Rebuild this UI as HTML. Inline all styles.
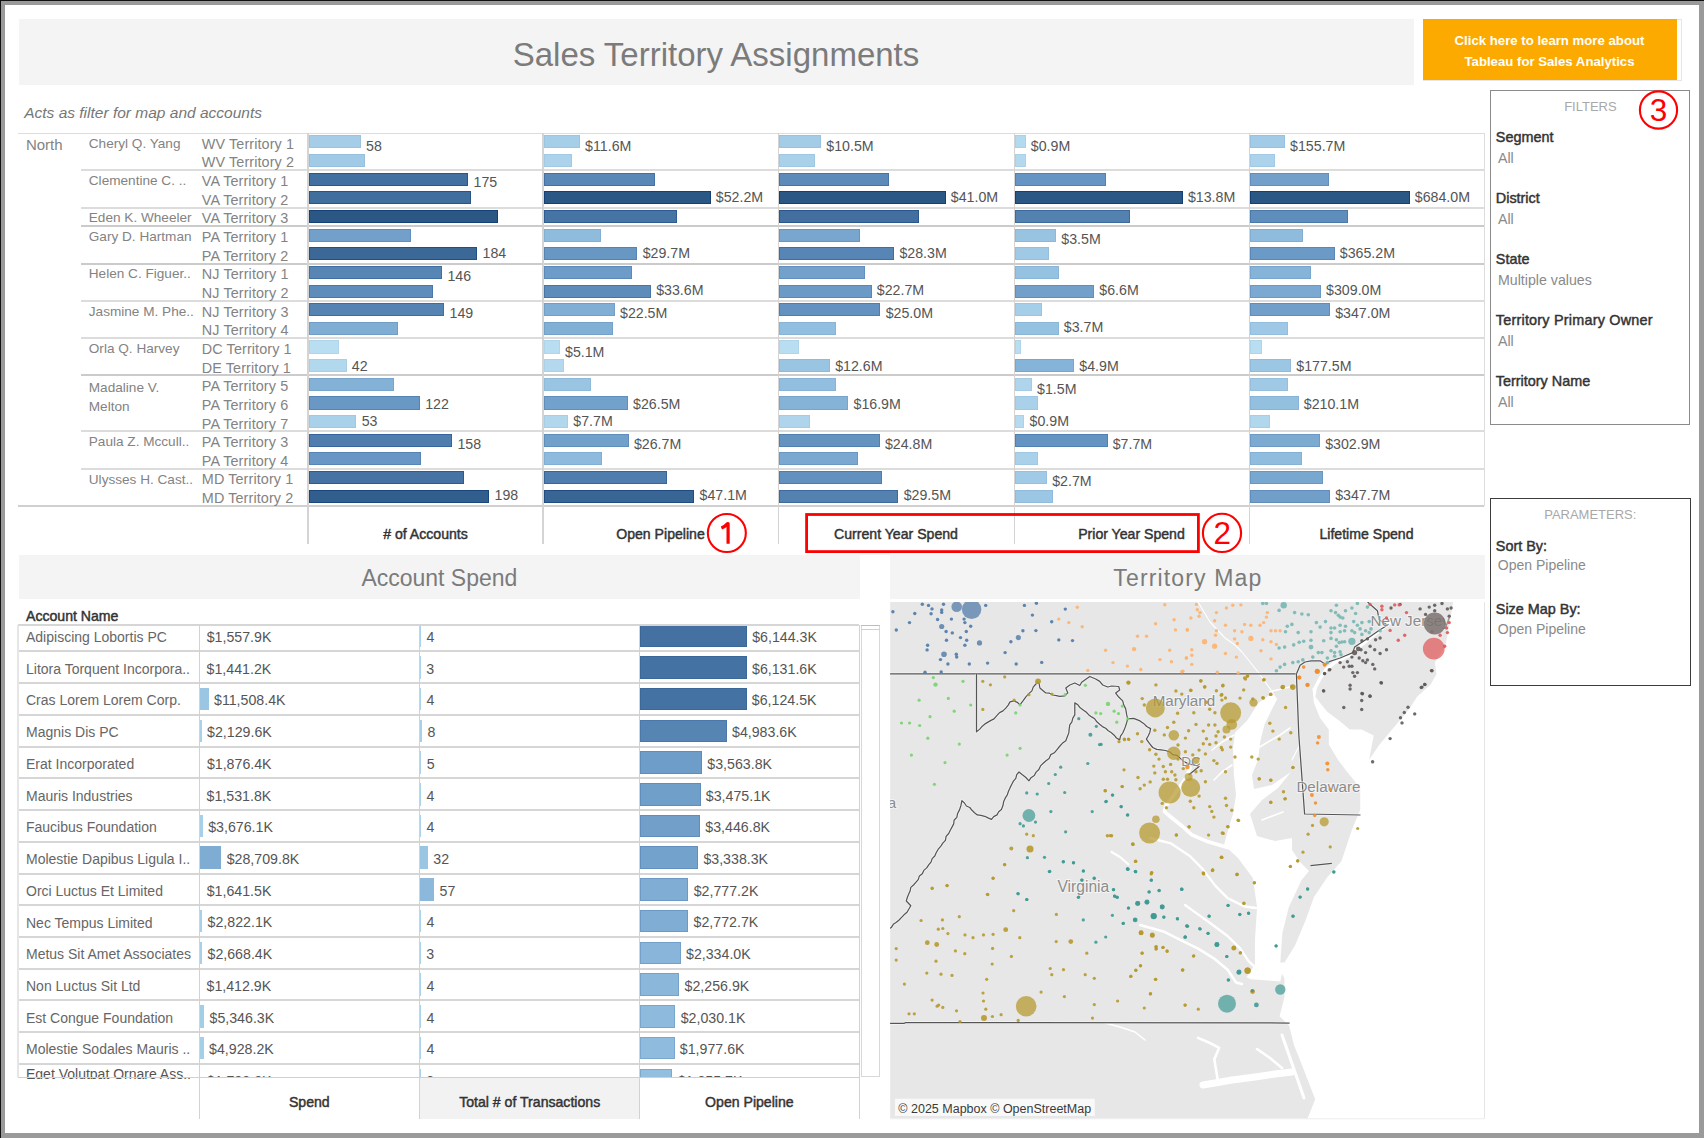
<!DOCTYPE html>
<html><head><meta charset="utf-8"><title>Sales Territory Assignments</title>
<style>
html,body{margin:0;padding:0;}
body{width:1704px;height:1138px;position:relative;overflow:hidden;background:#9a9a9a;font-family:"Liberation Sans", sans-serif;}
.t{position:absolute;white-space:nowrap;}
.r{position:absolute;box-sizing:border-box;}
svg{position:absolute;}
</style></head><body>

<div class="r" style="left:0.0px;top:0.0px;width:1704.0px;height:1.0px;background:#111;"></div>
<div class="r" style="left:0.0px;top:0.0px;width:1.0px;height:1138.0px;background:#111;"></div>
<div class="r" style="left:5.0px;top:5.0px;width:1694.0px;height:1128.0px;background:#ffffff;"></div>
<div class="r" style="left:19.0px;top:18.5px;width:1395.0px;height:66.5px;background:#f4f4f4;"></div>
<div class="t" style="left:416.0px;width:600px;text-align:center;top:38.1px;font-size:33px;line-height:33px;color:#7b7b7b;font-weight:normal;font-style:normal;">Sales Territory Assignments</div>
<div class="r" style="left:1423.0px;top:18.5px;width:259.0px;height:62.0px;background:#ffffff;border:1px solid #e6e6e6;border-left:none;"></div>
<div class="r" style="left:1423.0px;top:18.5px;width:253.5px;height:61.7px;background:#fdaa00;"></div>
<div class="t" style="left:1249.5px;width:600px;text-align:center;top:34.4px;font-size:13.2px;line-height:13.2px;color:#ffffff;font-weight:bold;font-style:normal;">Click here to learn more about</div>
<div class="t" style="left:1249.5px;width:600px;text-align:center;top:54.6px;font-size:13.2px;line-height:13.2px;color:#ffffff;font-weight:bold;font-style:normal;">Tableau for Sales Analytics</div>
<div class="t" style="left:24.2px;top:105.3px;font-size:15.5px;line-height:15.5px;color:#777777;font-weight:normal;font-style:italic;">Acts as filter for map and accounts</div>
<div class="r" style="left:18.0px;top:132.5px;width:1466.2px;height:1.2px;background:#dddddd;"></div>
<div class="r" style="left:81.0px;top:169.0px;width:1403.2px;height:2.0px;background:#dcdcdc;"></div>
<div class="r" style="left:81.0px;top:207.0px;width:1403.2px;height:2.0px;background:#dcdcdc;"></div>
<div class="r" style="left:81.0px;top:225.0px;width:1403.2px;height:2.0px;background:#cbcbcb;"></div>
<div class="r" style="left:81.0px;top:263.0px;width:1403.2px;height:2.0px;background:#cbcbcb;"></div>
<div class="r" style="left:81.0px;top:300.0px;width:1403.2px;height:2.0px;background:#dcdcdc;"></div>
<div class="r" style="left:81.0px;top:337.0px;width:1403.2px;height:2.0px;background:#dcdcdc;"></div>
<div class="r" style="left:81.0px;top:374.0px;width:1403.2px;height:2.0px;background:#cbcbcb;"></div>
<div class="r" style="left:81.0px;top:430.0px;width:1403.2px;height:2.0px;background:#dcdcdc;"></div>
<div class="r" style="left:81.0px;top:468.0px;width:1403.2px;height:2.0px;background:#dcdcdc;"></div>
<div class="r" style="left:18.0px;top:505.4px;width:1466.2px;height:1.4px;background:#d0d0d0;"></div>
<div class="r" style="left:307.4px;top:133.0px;width:1.2px;height:411.0px;background:#d4d4d4;"></div>
<div class="r" style="left:542.4px;top:133.0px;width:1.2px;height:411.0px;background:#d4d4d4;"></div>
<div class="r" style="left:777.7px;top:133.0px;width:1.2px;height:411.0px;background:#d4d4d4;"></div>
<div class="r" style="left:1013.5px;top:133.0px;width:1.2px;height:411.0px;background:#d4d4d4;"></div>
<div class="r" style="left:1248.8px;top:133.0px;width:1.2px;height:411.0px;background:#d4d4d4;"></div>
<div class="r" style="left:1483.6px;top:133.0px;width:1.2px;height:373.0px;background:#dddddd;"></div>
<div class="t" style="left:25.9px;top:136.8px;font-size:15px;line-height:15px;color:#838383;font-weight:normal;font-style:normal;">North</div>
<div class="t" style="left:88.8px;top:136.8px;font-size:13.6px;line-height:13.6px;color:#838383;font-weight:normal;font-style:normal;">Cheryl Q. Yang</div>
<div class="t" style="left:201.8px;top:136.7px;font-size:14.4px;line-height:14.4px;color:#838383;font-weight:normal;font-style:normal;letter-spacing:0.1px;">WV Territory 1</div>
<div class="t" style="left:201.8px;top:155.4px;font-size:14.4px;line-height:14.4px;color:#838383;font-weight:normal;font-style:normal;letter-spacing:0.1px;">WV Territory 2</div>
<div class="t" style="left:88.8px;top:174.1px;font-size:13.6px;line-height:13.6px;color:#838383;font-weight:normal;font-style:normal;">Clementine C. ..</div>
<div class="t" style="left:201.8px;top:174.0px;font-size:14.4px;line-height:14.4px;color:#838383;font-weight:normal;font-style:normal;letter-spacing:0.1px;">VA Territory 1</div>
<div class="t" style="left:201.8px;top:192.7px;font-size:14.4px;line-height:14.4px;color:#838383;font-weight:normal;font-style:normal;letter-spacing:0.1px;">VA Territory 2</div>
<div class="t" style="left:88.8px;top:211.4px;font-size:13.6px;line-height:13.6px;color:#838383;font-weight:normal;font-style:normal;">Eden K. Wheeler</div>
<div class="t" style="left:201.8px;top:211.3px;font-size:14.4px;line-height:14.4px;color:#838383;font-weight:normal;font-style:normal;letter-spacing:0.1px;">VA Territory 3</div>
<div class="t" style="left:88.8px;top:230.1px;font-size:13.6px;line-height:13.6px;color:#838383;font-weight:normal;font-style:normal;">Gary D. Hartman</div>
<div class="t" style="left:201.8px;top:230.0px;font-size:14.4px;line-height:14.4px;color:#838383;font-weight:normal;font-style:normal;letter-spacing:0.1px;">PA Territory 1</div>
<div class="t" style="left:201.8px;top:248.6px;font-size:14.4px;line-height:14.4px;color:#838383;font-weight:normal;font-style:normal;letter-spacing:0.1px;">PA Territory 2</div>
<div class="t" style="left:88.8px;top:267.4px;font-size:13.6px;line-height:13.6px;color:#838383;font-weight:normal;font-style:normal;">Helen C. Figuer..</div>
<div class="t" style="left:201.8px;top:267.3px;font-size:14.4px;line-height:14.4px;color:#838383;font-weight:normal;font-style:normal;letter-spacing:0.1px;">NJ Territory 1</div>
<div class="t" style="left:201.8px;top:285.9px;font-size:14.4px;line-height:14.4px;color:#838383;font-weight:normal;font-style:normal;letter-spacing:0.1px;">NJ Territory 2</div>
<div class="t" style="left:88.8px;top:304.7px;font-size:13.6px;line-height:13.6px;color:#838383;font-weight:normal;font-style:normal;">Jasmine M. Phe..</div>
<div class="t" style="left:201.8px;top:304.6px;font-size:14.4px;line-height:14.4px;color:#838383;font-weight:normal;font-style:normal;letter-spacing:0.1px;">NJ Territory 3</div>
<div class="t" style="left:201.8px;top:323.2px;font-size:14.4px;line-height:14.4px;color:#838383;font-weight:normal;font-style:normal;letter-spacing:0.1px;">NJ Territory 4</div>
<div class="t" style="left:88.8px;top:342.0px;font-size:13.6px;line-height:13.6px;color:#838383;font-weight:normal;font-style:normal;">Orla Q. Harvey</div>
<div class="t" style="left:201.8px;top:341.9px;font-size:14.4px;line-height:14.4px;color:#838383;font-weight:normal;font-style:normal;letter-spacing:0.1px;">DC Territory 1</div>
<div class="t" style="left:201.8px;top:360.5px;font-size:14.4px;line-height:14.4px;color:#838383;font-weight:normal;font-style:normal;letter-spacing:0.1px;">DE Territory 1</div>
<div class="t" style="left:88.8px;top:380.6px;font-size:13.6px;line-height:13.6px;color:#838383;font-weight:normal;font-style:normal;">Madaline V.</div>
<div class="t" style="left:88.8px;top:400.3px;font-size:13.6px;line-height:13.6px;color:#838383;font-weight:normal;font-style:normal;">Melton</div>
<div class="t" style="left:201.8px;top:379.2px;font-size:14.4px;line-height:14.4px;color:#838383;font-weight:normal;font-style:normal;letter-spacing:0.1px;">PA Territory 5</div>
<div class="t" style="left:201.8px;top:397.8px;font-size:14.4px;line-height:14.4px;color:#838383;font-weight:normal;font-style:normal;letter-spacing:0.1px;">PA Territory 6</div>
<div class="t" style="left:201.8px;top:416.5px;font-size:14.4px;line-height:14.4px;color:#838383;font-weight:normal;font-style:normal;letter-spacing:0.1px;">PA Territory 7</div>
<div class="t" style="left:88.8px;top:435.2px;font-size:13.6px;line-height:13.6px;color:#838383;font-weight:normal;font-style:normal;">Paula Z. Mccull..</div>
<div class="t" style="left:201.8px;top:435.1px;font-size:14.4px;line-height:14.4px;color:#838383;font-weight:normal;font-style:normal;letter-spacing:0.1px;">PA Territory 3</div>
<div class="t" style="left:201.8px;top:453.8px;font-size:14.4px;line-height:14.4px;color:#838383;font-weight:normal;font-style:normal;letter-spacing:0.1px;">PA Territory 4</div>
<div class="t" style="left:88.8px;top:472.5px;font-size:13.6px;line-height:13.6px;color:#838383;font-weight:normal;font-style:normal;">Ulysses H. Cast..</div>
<div class="t" style="left:201.8px;top:472.4px;font-size:14.4px;line-height:14.4px;color:#838383;font-weight:normal;font-style:normal;letter-spacing:0.1px;">MD Territory 1</div>
<div class="t" style="left:201.8px;top:491.1px;font-size:14.4px;line-height:14.4px;color:#838383;font-weight:normal;font-style:normal;letter-spacing:0.1px;">MD Territory 2</div>
<div class="r" style="left:308.9px;top:135.3px;width:51.9px;height:13.2px;background:#a5cde8;border:1px solid #9bc4e1;"></div>
<div class="r" style="left:308.9px;top:154.0px;width:56.6px;height:13.2px;background:#a0cae6;border:1px solid #96c0de;"></div>
<div class="r" style="left:308.9px;top:172.6px;width:159.5px;height:13.2px;background:#4270a0;border:1px solid #29578d;"></div>
<div class="r" style="left:308.9px;top:191.2px;width:162.1px;height:13.2px;background:#406e9d;border:1px solid #27548b;"></div>
<div class="r" style="left:308.9px;top:209.9px;width:189.4px;height:13.2px;background:#2a5783;border:1px solid #134077;"></div>
<div class="r" style="left:308.9px;top:228.6px;width:102.5px;height:13.2px;background:#72a0cb;border:1px solid #618ebd;"></div>
<div class="r" style="left:308.9px;top:247.2px;width:168.4px;height:13.2px;background:#3b6897;border:1px solid #224f86;"></div>
<div class="r" style="left:308.9px;top:265.8px;width:133.3px;height:13.2px;background:#5786b5;border:1px solid #406fa3;"></div>
<div class="r" style="left:308.9px;top:284.5px;width:124.4px;height:13.2px;background:#5e8dbb;border:1px solid #4977aa;"></div>
<div class="r" style="left:308.9px;top:303.2px;width:135.4px;height:13.2px;background:#5584b3;border:1px solid #3e6da1;"></div>
<div class="r" style="left:308.9px;top:321.8px;width:89.1px;height:13.2px;background:#80add4;border:1px solid #719ec8;"></div>
<div class="r" style="left:308.9px;top:340.4px;width:30.5px;height:13.2px;background:#b9ddf1;border:1px solid #b0d4ea;"></div>
<div class="r" style="left:308.9px;top:359.1px;width:37.7px;height:13.2px;background:#b2d8ee;border:1px solid #a9cfe7;"></div>
<div class="r" style="left:308.9px;top:377.8px;width:84.7px;height:13.2px;background:#84b2d7;border:1px solid #76a4cc;"></div>
<div class="r" style="left:308.9px;top:396.4px;width:111.1px;height:13.2px;background:#6998c5;border:1px solid #5685b5;"></div>
<div class="r" style="left:308.9px;top:415.1px;width:47.6px;height:13.2px;background:#a9d1ea;border:1px solid #a0c8e3;"></div>
<div class="r" style="left:308.9px;top:433.7px;width:143.3px;height:13.2px;background:#4f7dae;border:1px solid #37659b;"></div>
<div class="r" style="left:308.9px;top:452.3px;width:111.9px;height:13.2px;background:#6897c5;border:1px solid #5584b5;"></div>
<div class="r" style="left:308.9px;top:471.0px;width:155.1px;height:13.2px;background:#4673a4;border:1px solid #2d5a91;"></div>
<div class="r" style="left:308.9px;top:489.6px;width:180.4px;height:13.2px;background:#315e8c;border:1px solid #19467d;"></div>
<div class="t" style="left:366.0px;top:138.9px;font-size:14.2px;line-height:14.2px;color:#555555;font-weight:normal;font-style:normal;">58</div>
<div class="t" style="left:473.6px;top:175.4px;font-size:14.2px;line-height:14.2px;color:#555555;font-weight:normal;font-style:normal;">175</div>
<div class="t" style="left:482.5px;top:245.6px;font-size:14.2px;line-height:14.2px;color:#555555;font-weight:normal;font-style:normal;">184</div>
<div class="t" style="left:447.4px;top:268.7px;font-size:14.2px;line-height:14.2px;color:#555555;font-weight:normal;font-style:normal;">146</div>
<div class="t" style="left:449.5px;top:306.1px;font-size:14.2px;line-height:14.2px;color:#555555;font-weight:normal;font-style:normal;">149</div>
<div class="t" style="left:351.8px;top:358.5px;font-size:14.2px;line-height:14.2px;color:#555555;font-weight:normal;font-style:normal;">42</div>
<div class="t" style="left:425.2px;top:397.1px;font-size:14.2px;line-height:14.2px;color:#555555;font-weight:normal;font-style:normal;">122</div>
<div class="t" style="left:361.7px;top:413.9px;font-size:14.2px;line-height:14.2px;color:#555555;font-weight:normal;font-style:normal;">53</div>
<div class="t" style="left:457.4px;top:436.8px;font-size:14.2px;line-height:14.2px;color:#555555;font-weight:normal;font-style:normal;">158</div>
<div class="t" style="left:494.5px;top:487.5px;font-size:14.2px;line-height:14.2px;color:#555555;font-weight:normal;font-style:normal;">198</div>
<div class="r" style="left:543.9px;top:135.3px;width:36.0px;height:13.2px;background:#a5cee8;border:1px solid #9bc5e1;"></div>
<div class="r" style="left:543.9px;top:154.0px;width:28.5px;height:13.2px;background:#acd3eb;border:1px solid #a3cae4;"></div>
<div class="r" style="left:543.9px;top:172.6px;width:111.1px;height:13.2px;background:#5988b7;border:1px solid #4371a5;"></div>
<div class="r" style="left:543.9px;top:191.2px;width:166.7px;height:13.2px;background:#2a5783;border:1px solid #134077;"></div>
<div class="r" style="left:543.9px;top:209.9px;width:133.3px;height:13.2px;background:#4674a5;border:1px solid #2d5b92;"></div>
<div class="r" style="left:543.9px;top:228.6px;width:57.6px;height:13.2px;background:#8fbcdd;border:1px solid #82afd3;"></div>
<div class="r" style="left:543.9px;top:247.2px;width:93.6px;height:13.2px;background:#6897c4;border:1px solid #5584b4;"></div>
<div class="r" style="left:543.9px;top:265.8px;width:88.3px;height:13.2px;background:#6d9cc8;border:1px solid #5b8ab9;"></div>
<div class="r" style="left:543.9px;top:284.5px;width:107.1px;height:13.2px;background:#5d8bba;border:1px solid #4775a8;"></div>
<div class="r" style="left:543.9px;top:303.2px;width:70.9px;height:13.2px;background:#80aed4;border:1px solid #719fc8;"></div>
<div class="r" style="left:543.9px;top:321.8px;width:69.4px;height:13.2px;background:#82b0d5;border:1px solid #73a1c9;"></div>
<div class="r" style="left:543.9px;top:340.4px;width:15.9px;height:13.2px;background:#b9ddf1;border:1px solid #b0d4ea;"></div>
<div class="r" style="left:543.9px;top:359.1px;width:20.6px;height:13.2px;background:#b4d9ef;border:1px solid #abd0e8;"></div>
<div class="r" style="left:543.9px;top:377.8px;width:47.6px;height:13.2px;background:#99c5e3;border:1px solid #8ebadb;"></div>
<div class="r" style="left:543.9px;top:396.4px;width:84.0px;height:13.2px;background:#72a1cb;border:1px solid #618fbd;"></div>
<div class="r" style="left:543.9px;top:415.1px;width:24.2px;height:13.2px;background:#b1d7ed;border:1px solid #a8cee6;"></div>
<div class="r" style="left:543.9px;top:433.7px;width:84.8px;height:13.2px;background:#71a0ca;border:1px solid #608ebc;"></div>
<div class="r" style="left:543.9px;top:452.3px;width:58.4px;height:13.2px;background:#8ebbdd;border:1px solid #81aed3;"></div>
<div class="r" style="left:543.9px;top:471.0px;width:123.6px;height:13.2px;background:#4f7dad;border:1px solid #37659a;"></div>
<div class="r" style="left:543.9px;top:489.6px;width:150.5px;height:13.2px;background:#386593;border:1px solid #1f4c82;"></div>
<div class="t" style="left:585.1px;top:138.9px;font-size:14.2px;line-height:14.2px;color:#555555;font-weight:normal;font-style:normal;">$11.6M</div>
<div class="t" style="left:715.8px;top:189.9px;font-size:14.2px;line-height:14.2px;color:#555555;font-weight:normal;font-style:normal;">$52.2M</div>
<div class="t" style="left:642.7px;top:245.6px;font-size:14.2px;line-height:14.2px;color:#555555;font-weight:normal;font-style:normal;">$29.7M</div>
<div class="t" style="left:656.2px;top:282.5px;font-size:14.2px;line-height:14.2px;color:#555555;font-weight:normal;font-style:normal;">$33.6M</div>
<div class="t" style="left:620.0px;top:306.1px;font-size:14.2px;line-height:14.2px;color:#555555;font-weight:normal;font-style:normal;">$22.5M</div>
<div class="t" style="left:565.0px;top:344.8px;font-size:14.2px;line-height:14.2px;color:#555555;font-weight:normal;font-style:normal;">$5.1M</div>
<div class="t" style="left:633.1px;top:397.1px;font-size:14.2px;line-height:14.2px;color:#555555;font-weight:normal;font-style:normal;">$26.5M</div>
<div class="t" style="left:573.3px;top:413.9px;font-size:14.2px;line-height:14.2px;color:#555555;font-weight:normal;font-style:normal;">$7.7M</div>
<div class="t" style="left:633.9px;top:436.8px;font-size:14.2px;line-height:14.2px;color:#555555;font-weight:normal;font-style:normal;">$26.7M</div>
<div class="t" style="left:699.6px;top:487.5px;font-size:14.2px;line-height:14.2px;color:#555555;font-weight:normal;font-style:normal;">$47.1M</div>
<div class="r" style="left:779.2px;top:135.3px;width:41.9px;height:13.2px;background:#a3cce7;border:1px solid #99c2e0;"></div>
<div class="r" style="left:779.2px;top:154.0px;width:35.7px;height:13.2px;background:#a9d1ea;border:1px solid #a0c8e3;"></div>
<div class="r" style="left:779.2px;top:172.6px;width:109.9px;height:13.2px;background:#5c8ab9;border:1px solid #4674a7;"></div>
<div class="r" style="left:779.2px;top:191.2px;width:166.4px;height:13.2px;background:#2a5783;border:1px solid #134077;"></div>
<div class="r" style="left:779.2px;top:209.9px;width:139.5px;height:13.2px;background:#426f9f;border:1px solid #29568c;"></div>
<div class="r" style="left:779.2px;top:228.6px;width:80.8px;height:13.2px;background:#78a6cf;border:1px solid #6896c2;"></div>
<div class="r" style="left:779.2px;top:247.2px;width:115.0px;height:13.2px;background:#5785b5;border:1px solid #406ea3;"></div>
<div class="r" style="left:779.2px;top:265.8px;width:85.4px;height:13.2px;background:#73a1cc;border:1px solid #6290be;"></div>
<div class="r" style="left:779.2px;top:284.5px;width:92.4px;height:13.2px;background:#6b9ac7;border:1px solid #5987b8;"></div>
<div class="r" style="left:779.2px;top:303.2px;width:101.3px;height:13.2px;background:#6392c0;border:1px solid #4f7daf;"></div>
<div class="r" style="left:779.2px;top:321.8px;width:57.3px;height:13.2px;background:#92bfe0;border:1px solid #86b3d7;"></div>
<div class="r" style="left:779.2px;top:340.4px;width:20.3px;height:13.2px;background:#b9ddf1;border:1px solid #b0d4ea;"></div>
<div class="r" style="left:779.2px;top:359.1px;width:50.8px;height:13.2px;background:#99c5e3;border:1px solid #8ebadb;"></div>
<div class="r" style="left:779.2px;top:377.8px;width:57.3px;height:13.2px;background:#92bfe0;border:1px solid #86b3d7;"></div>
<div class="r" style="left:779.2px;top:396.4px;width:69.1px;height:13.2px;background:#85b3d7;border:1px solid #77a5cc;"></div>
<div class="r" style="left:779.2px;top:415.1px;width:30.6px;height:13.2px;background:#aed5ec;border:1px solid #a5cce5;"></div>
<div class="r" style="left:779.2px;top:433.7px;width:100.5px;height:13.2px;background:#6493c0;border:1px solid #507fb0;"></div>
<div class="r" style="left:779.2px;top:452.3px;width:79.0px;height:13.2px;background:#7aa8d0;border:1px solid #6a98c3;"></div>
<div class="r" style="left:779.2px;top:471.0px;width:102.5px;height:13.2px;background:#6291bf;border:1px solid #4e7cae;"></div>
<div class="r" style="left:779.2px;top:489.6px;width:119.3px;height:13.2px;background:#5382b1;border:1px solid #3c6a9e;"></div>
<div class="t" style="left:826.3px;top:138.9px;font-size:14.2px;line-height:14.2px;color:#555555;font-weight:normal;font-style:normal;">$10.5M</div>
<div class="t" style="left:950.8px;top:189.9px;font-size:14.2px;line-height:14.2px;color:#555555;font-weight:normal;font-style:normal;">$41.0M</div>
<div class="t" style="left:899.4px;top:245.6px;font-size:14.2px;line-height:14.2px;color:#555555;font-weight:normal;font-style:normal;">$28.3M</div>
<div class="t" style="left:876.8px;top:282.5px;font-size:14.2px;line-height:14.2px;color:#555555;font-weight:normal;font-style:normal;">$22.7M</div>
<div class="t" style="left:885.7px;top:306.1px;font-size:14.2px;line-height:14.2px;color:#555555;font-weight:normal;font-style:normal;">$25.0M</div>
<div class="t" style="left:835.2px;top:358.5px;font-size:14.2px;line-height:14.2px;color:#555555;font-weight:normal;font-style:normal;">$12.6M</div>
<div class="t" style="left:853.5px;top:397.1px;font-size:14.2px;line-height:14.2px;color:#555555;font-weight:normal;font-style:normal;">$16.9M</div>
<div class="t" style="left:884.9px;top:436.8px;font-size:14.2px;line-height:14.2px;color:#555555;font-weight:normal;font-style:normal;">$24.8M</div>
<div class="t" style="left:903.7px;top:487.5px;font-size:14.2px;line-height:14.2px;color:#555555;font-weight:normal;font-style:normal;">$29.5M</div>
<div class="r" style="left:1015.0px;top:135.3px;width:10.6px;height:13.2px;background:#b4daef;border:1px solid #abd1e8;"></div>
<div class="r" style="left:1015.0px;top:154.0px;width:11.4px;height:13.2px;background:#b4d9ef;border:1px solid #abd0e8;"></div>
<div class="r" style="left:1015.0px;top:172.6px;width:91.1px;height:13.2px;background:#6795c3;border:1px solid #5481b3;"></div>
<div class="r" style="left:1015.0px;top:191.2px;width:167.7px;height:13.2px;background:#2a5783;border:1px solid #134077;"></div>
<div class="r" style="left:1015.0px;top:209.9px;width:115.4px;height:13.2px;background:#5382b1;border:1px solid #3c6a9e;"></div>
<div class="r" style="left:1015.0px;top:228.6px;width:41.1px;height:13.2px;background:#98c4e2;border:1px solid #8db9d9;"></div>
<div class="r" style="left:1015.0px;top:247.2px;width:33.9px;height:13.2px;background:#9fc9e5;border:1px solid #95bfdd;"></div>
<div class="r" style="left:1015.0px;top:265.8px;width:44.0px;height:13.2px;background:#95c2e1;border:1px solid #89b6d8;"></div>
<div class="r" style="left:1015.0px;top:284.5px;width:79.1px;height:13.2px;background:#72a0cb;border:1px solid #618ebd;"></div>
<div class="r" style="left:1015.0px;top:303.2px;width:27.4px;height:13.2px;background:#a5cee8;border:1px solid #9bc5e1;"></div>
<div class="r" style="left:1015.0px;top:321.8px;width:43.6px;height:13.2px;background:#96c2e1;border:1px solid #8ab6d8;"></div>
<div class="r" style="left:1015.0px;top:340.4px;width:5.8px;height:13.2px;background:#b9ddf1;border:1px solid #b0d4ea;"></div>
<div class="r" style="left:1015.0px;top:359.1px;width:59.1px;height:13.2px;background:#86b4d8;border:1px solid #78a6cd;"></div>
<div class="r" style="left:1015.0px;top:377.8px;width:16.9px;height:13.2px;background:#afd5ec;border:1px solid #a6cce5;"></div>
<div class="r" style="left:1015.0px;top:396.4px;width:23.1px;height:13.2px;background:#a9d1ea;border:1px solid #a0c8e3;"></div>
<div class="r" style="left:1015.0px;top:415.1px;width:9.4px;height:13.2px;background:#b6daef;border:1px solid #add1e9;"></div>
<div class="r" style="left:1015.0px;top:433.7px;width:92.5px;height:13.2px;background:#6594c2;border:1px solid #5180b2;"></div>
<div class="r" style="left:1015.0px;top:452.3px;width:23.1px;height:13.2px;background:#a9d1ea;border:1px solid #a0c8e3;"></div>
<div class="r" style="left:1015.0px;top:471.0px;width:32.0px;height:13.2px;background:#a0cae6;border:1px solid #96c0de;"></div>
<div class="r" style="left:1015.0px;top:489.6px;width:37.5px;height:13.2px;background:#9bc6e4;border:1px solid #90bbdc;"></div>
<div class="t" style="left:1030.8px;top:138.9px;font-size:14.2px;line-height:14.2px;color:#555555;font-weight:normal;font-style:normal;">$0.9M</div>
<div class="t" style="left:1187.9px;top:189.9px;font-size:14.2px;line-height:14.2px;color:#555555;font-weight:normal;font-style:normal;">$13.8M</div>
<div class="t" style="left:1061.3px;top:231.9px;font-size:14.2px;line-height:14.2px;color:#555555;font-weight:normal;font-style:normal;">$3.5M</div>
<div class="t" style="left:1099.3px;top:282.5px;font-size:14.2px;line-height:14.2px;color:#555555;font-weight:normal;font-style:normal;">$6.6M</div>
<div class="t" style="left:1063.8px;top:320.0px;font-size:14.2px;line-height:14.2px;color:#555555;font-weight:normal;font-style:normal;">$3.7M</div>
<div class="t" style="left:1079.3px;top:358.5px;font-size:14.2px;line-height:14.2px;color:#555555;font-weight:normal;font-style:normal;">$4.9M</div>
<div class="t" style="left:1037.1px;top:381.6px;font-size:14.2px;line-height:14.2px;color:#555555;font-weight:normal;font-style:normal;">$1.5M</div>
<div class="t" style="left:1029.6px;top:413.9px;font-size:14.2px;line-height:14.2px;color:#555555;font-weight:normal;font-style:normal;">$0.9M</div>
<div class="t" style="left:1112.7px;top:436.8px;font-size:14.2px;line-height:14.2px;color:#555555;font-weight:normal;font-style:normal;">$7.7M</div>
<div class="t" style="left:1052.2px;top:474.2px;font-size:14.2px;line-height:14.2px;color:#555555;font-weight:normal;font-style:normal;">$2.7M</div>
<div class="r" style="left:1250.3px;top:135.3px;width:34.6px;height:13.2px;background:#a2cbe7;border:1px solid #98c1e0;"></div>
<div class="r" style="left:1250.3px;top:154.0px;width:24.5px;height:13.2px;background:#acd3eb;border:1px solid #a3cae4;"></div>
<div class="r" style="left:1250.3px;top:172.6px;width:78.8px;height:13.2px;background:#72a0cb;border:1px solid #618ebd;"></div>
<div class="r" style="left:1250.3px;top:191.2px;width:159.3px;height:13.2px;background:#2a5783;border:1px solid #134077;"></div>
<div class="r" style="left:1250.3px;top:209.9px;width:98.0px;height:13.2px;background:#5f8ebc;border:1px solid #4a79ab;"></div>
<div class="r" style="left:1250.3px;top:228.6px;width:52.6px;height:13.2px;background:#8fbcdd;border:1px solid #82afd3;"></div>
<div class="r" style="left:1250.3px;top:247.2px;width:84.3px;height:13.2px;background:#6c9ac7;border:1px solid #5a87b8;"></div>
<div class="r" style="left:1250.3px;top:265.8px;width:60.8px;height:13.2px;background:#86b3d8;border:1px solid #78a5cd;"></div>
<div class="r" style="left:1250.3px;top:284.5px;width:70.6px;height:13.2px;background:#7ba9d1;border:1px solid #6b99c4;"></div>
<div class="r" style="left:1250.3px;top:303.2px;width:79.7px;height:13.2px;background:#719fca;border:1px solid #5f8dbc;"></div>
<div class="r" style="left:1250.3px;top:321.8px;width:38.2px;height:13.2px;background:#9ec8e5;border:1px solid #94bedd;"></div>
<div class="r" style="left:1250.3px;top:340.4px;width:12.0px;height:13.2px;background:#b9ddf1;border:1px solid #b0d4ea;"></div>
<div class="r" style="left:1250.3px;top:359.1px;width:40.8px;height:13.2px;background:#9bc6e4;border:1px solid #90bbdc;"></div>
<div class="r" style="left:1250.3px;top:377.8px;width:37.3px;height:13.2px;background:#9fc9e5;border:1px solid #95bfdd;"></div>
<div class="r" style="left:1250.3px;top:396.4px;width:48.3px;height:13.2px;background:#94c0e0;border:1px solid #88b4d7;"></div>
<div class="r" style="left:1250.3px;top:415.1px;width:20.0px;height:13.2px;background:#b1d7ed;border:1px solid #a8cee6;"></div>
<div class="r" style="left:1250.3px;top:433.7px;width:69.7px;height:13.2px;background:#7caad1;border:1px solid #6c9ac4;"></div>
<div class="r" style="left:1250.3px;top:452.3px;width:51.7px;height:13.2px;background:#90bdde;border:1px solid #84b1d4;"></div>
<div class="r" style="left:1250.3px;top:471.0px;width:72.8px;height:13.2px;background:#78a7cf;border:1px solid #6897c2;"></div>
<div class="r" style="left:1250.3px;top:489.6px;width:79.7px;height:13.2px;background:#719fca;border:1px solid #5f8dbc;"></div>
<div class="t" style="left:1290.1px;top:138.9px;font-size:14.2px;line-height:14.2px;color:#555555;font-weight:normal;font-style:normal;">$155.7M</div>
<div class="t" style="left:1414.8px;top:189.9px;font-size:14.2px;line-height:14.2px;color:#555555;font-weight:normal;font-style:normal;">$684.0M</div>
<div class="t" style="left:1339.8px;top:245.6px;font-size:14.2px;line-height:14.2px;color:#555555;font-weight:normal;font-style:normal;">$365.2M</div>
<div class="t" style="left:1326.1px;top:282.5px;font-size:14.2px;line-height:14.2px;color:#555555;font-weight:normal;font-style:normal;">$309.0M</div>
<div class="t" style="left:1335.2px;top:306.1px;font-size:14.2px;line-height:14.2px;color:#555555;font-weight:normal;font-style:normal;">$347.0M</div>
<div class="t" style="left:1296.3px;top:358.5px;font-size:14.2px;line-height:14.2px;color:#555555;font-weight:normal;font-style:normal;">$177.5M</div>
<div class="t" style="left:1303.8px;top:397.1px;font-size:14.2px;line-height:14.2px;color:#555555;font-weight:normal;font-style:normal;">$210.1M</div>
<div class="t" style="left:1325.2px;top:436.8px;font-size:14.2px;line-height:14.2px;color:#555555;font-weight:normal;font-style:normal;">$302.9M</div>
<div class="t" style="left:1335.2px;top:487.5px;font-size:14.2px;line-height:14.2px;color:#555555;font-weight:normal;font-style:normal;">$347.7M</div>
<div class="t" style="left:125.5px;width:600px;text-align:center;top:526.5px;font-size:14.1px;line-height:14.1px;color:#333333;font-weight:normal;font-style:normal;-webkit-text-stroke:0.45px #333333;"># of Accounts</div>
<div class="t" style="left:360.5px;width:600px;text-align:center;top:526.5px;font-size:14.1px;line-height:14.1px;color:#333333;font-weight:normal;font-style:normal;-webkit-text-stroke:0.45px #333333;">Open Pipeline</div>
<div class="t" style="left:596.0px;width:600px;text-align:center;top:526.5px;font-size:14.1px;line-height:14.1px;color:#333333;font-weight:normal;font-style:normal;-webkit-text-stroke:0.45px #333333;">Current Year Spend</div>
<div class="t" style="left:831.5px;width:600px;text-align:center;top:526.5px;font-size:14.1px;line-height:14.1px;color:#333333;font-weight:normal;font-style:normal;-webkit-text-stroke:0.45px #333333;">Prior Year Spend</div>
<div class="t" style="left:1066.5px;width:600px;text-align:center;top:526.5px;font-size:14.1px;line-height:14.1px;color:#333333;font-weight:normal;font-style:normal;-webkit-text-stroke:0.45px #333333;">Lifetime Spend</div>
<div class="r" style="left:19.0px;top:555.0px;width:841.0px;height:44.0px;background:#f4f4f4;"></div>
<div class="t" style="left:139.4px;width:600px;text-align:center;top:566.8px;font-size:23px;line-height:23px;color:#7b7b7b;font-weight:normal;font-style:normal;">Account Spend</div>
<div class="r" style="left:890.0px;top:555.0px;width:594.5px;height:44.0px;background:#f4f4f4;"></div>
<div class="t" style="left:887.9px;width:600px;text-align:center;top:566.8px;font-size:23px;line-height:23px;color:#7b7b7b;font-weight:normal;font-style:normal;letter-spacing:1.15px;">Territory Map</div>
<div class="t" style="left:26.0px;top:608.5px;font-size:14.1px;line-height:14.1px;color:#333333;font-weight:normal;font-style:normal;-webkit-text-stroke:0.45px #333333;">Account Name</div>
<div style="position:absolute;left:0;top:625.0px;width:870px;height:452.4px;overflow:hidden;">
<div class="t" style="left:26.0px;top:5.0px;font-size:14px;line-height:14px;color:#666666;font-weight:normal;font-style:normal;">Adipiscing Lobortis PC</div>
<div class="t" style="left:206.7px;top:4.9px;font-size:14.2px;line-height:14.2px;color:#555555;font-weight:normal;font-style:normal;">$1,557.9K</div>
<div class="r" style="left:420.3px;top:-0.6px;width:1.0px;height:22.6px;background:#abd2eb;"></div>
<div class="t" style="left:426.5px;top:4.9px;font-size:14.2px;line-height:14.2px;color:#555555;font-weight:normal;font-style:normal;">4</div>
<div class="r" style="left:640.2px;top:-0.6px;width:106.8px;height:22.6px;background:#4471a1;border:1px solid #3a6799;"></div>
<div class="t" style="left:752.2px;top:4.9px;font-size:14.2px;line-height:14.2px;color:#555555;font-weight:normal;font-style:normal;">$6,144.3K</div>
<div class="t" style="left:26.0px;top:36.7px;font-size:14px;line-height:14px;color:#666666;font-weight:normal;font-style:normal;">Litora Torquent Incorpora..</div>
<div class="t" style="left:206.6px;top:36.7px;font-size:14.2px;line-height:14.2px;color:#555555;font-weight:normal;font-style:normal;">$1,441.2K</div>
<div class="r" style="left:420.3px;top:31.1px;width:0.8px;height:22.6px;background:#abd2eb;"></div>
<div class="t" style="left:426.2px;top:36.7px;font-size:14.2px;line-height:14.2px;color:#555555;font-weight:normal;font-style:normal;">3</div>
<div class="r" style="left:640.2px;top:31.1px;width:106.6px;height:22.6px;background:#4472a2;border:1px solid #3a689a;"></div>
<div class="t" style="left:752.0px;top:36.7px;font-size:14.2px;line-height:14.2px;color:#555555;font-weight:normal;font-style:normal;">$6,131.6K</div>
<div class="t" style="left:26.0px;top:68.4px;font-size:14px;line-height:14px;color:#666666;font-weight:normal;font-style:normal;">Cras Lorem Lorem Corp.</div>
<div class="r" style="left:200.3px;top:62.8px;width:8.5px;height:22.6px;background:#9bc6e3;"></div>
<div class="t" style="left:214.0px;top:68.4px;font-size:14.2px;line-height:14.2px;color:#555555;font-weight:normal;font-style:normal;">$11,508.4K</div>
<div class="r" style="left:420.3px;top:62.8px;width:1.0px;height:22.6px;background:#abd2eb;"></div>
<div class="t" style="left:426.5px;top:68.4px;font-size:14.2px;line-height:14.2px;color:#555555;font-weight:normal;font-style:normal;">4</div>
<div class="r" style="left:640.2px;top:62.8px;width:106.4px;height:22.6px;background:#4472a2;border:1px solid #3a689a;"></div>
<div class="t" style="left:751.8px;top:68.4px;font-size:14.2px;line-height:14.2px;color:#555555;font-weight:normal;font-style:normal;">$6,124.5K</div>
<div class="t" style="left:26.0px;top:100.1px;font-size:14px;line-height:14px;color:#666666;font-weight:normal;font-style:normal;">Magnis Dis PC</div>
<div class="r" style="left:200.3px;top:94.6px;width:1.6px;height:22.6px;background:#a9d1ea;"></div>
<div class="t" style="left:207.1px;top:100.1px;font-size:14.2px;line-height:14.2px;color:#555555;font-weight:normal;font-style:normal;">$2,129.6K</div>
<div class="r" style="left:420.3px;top:94.6px;width:2.0px;height:22.6px;background:#a8d0ea;"></div>
<div class="t" style="left:427.5px;top:100.1px;font-size:14.2px;line-height:14.2px;color:#555555;font-weight:normal;font-style:normal;">8</div>
<div class="r" style="left:640.2px;top:94.6px;width:86.6px;height:22.6px;background:#5685b4;border:1px solid #4978aa;"></div>
<div class="t" style="left:732.0px;top:100.1px;font-size:14.2px;line-height:14.2px;color:#555555;font-weight:normal;font-style:normal;">$4,983.6K</div>
<div class="t" style="left:26.0px;top:131.9px;font-size:14px;line-height:14px;color:#666666;font-weight:normal;font-style:normal;">Erat Incorporated</div>
<div class="t" style="left:206.9px;top:131.8px;font-size:14.2px;line-height:14.2px;color:#555555;font-weight:normal;font-style:normal;">$1,876.4K</div>
<div class="r" style="left:420.3px;top:126.3px;width:1.2px;height:22.6px;background:#aad2ea;"></div>
<div class="t" style="left:426.7px;top:131.8px;font-size:14.2px;line-height:14.2px;color:#555555;font-weight:normal;font-style:normal;">5</div>
<div class="r" style="left:640.2px;top:126.3px;width:61.9px;height:22.6px;background:#6e9dc9;border:1px solid #5e8cbb;"></div>
<div class="t" style="left:707.3px;top:131.8px;font-size:14.2px;line-height:14.2px;color:#555555;font-weight:normal;font-style:normal;">$3,563.8K</div>
<div class="t" style="left:26.0px;top:163.6px;font-size:14px;line-height:14px;color:#666666;font-weight:normal;font-style:normal;">Mauris Industries</div>
<div class="t" style="left:206.6px;top:163.5px;font-size:14.2px;line-height:14.2px;color:#555555;font-weight:normal;font-style:normal;">$1,531.8K</div>
<div class="r" style="left:420.3px;top:158.0px;width:1.0px;height:22.6px;background:#abd2eb;"></div>
<div class="t" style="left:426.5px;top:163.5px;font-size:14.2px;line-height:14.2px;color:#555555;font-weight:normal;font-style:normal;">4</div>
<div class="r" style="left:640.2px;top:158.0px;width:60.4px;height:22.6px;background:#709fca;border:1px solid #5f8ebc;"></div>
<div class="t" style="left:705.8px;top:163.5px;font-size:14.2px;line-height:14.2px;color:#555555;font-weight:normal;font-style:normal;">$3,475.1K</div>
<div class="t" style="left:26.0px;top:195.3px;font-size:14px;line-height:14px;color:#666666;font-weight:normal;font-style:normal;">Faucibus Foundation</div>
<div class="r" style="left:200.3px;top:189.7px;width:2.7px;height:22.6px;background:#a7cfe9;"></div>
<div class="t" style="left:208.2px;top:195.3px;font-size:14.2px;line-height:14.2px;color:#555555;font-weight:normal;font-style:normal;">$3,676.1K</div>
<div class="r" style="left:420.3px;top:189.7px;width:1.0px;height:22.6px;background:#abd2eb;"></div>
<div class="t" style="left:426.5px;top:195.3px;font-size:14.2px;line-height:14.2px;color:#555555;font-weight:normal;font-style:normal;">4</div>
<div class="r" style="left:640.2px;top:189.7px;width:59.9px;height:22.6px;background:#719fca;border:1px solid #608ebc;"></div>
<div class="t" style="left:705.3px;top:195.3px;font-size:14.2px;line-height:14.2px;color:#555555;font-weight:normal;font-style:normal;">$3,446.8K</div>
<div class="t" style="left:26.0px;top:227.0px;font-size:14px;line-height:14px;color:#666666;font-weight:normal;font-style:normal;">Molestie Dapibus Ligula I..</div>
<div class="r" style="left:200.3px;top:221.4px;width:21.2px;height:22.6px;background:#7eacd2;"></div>
<div class="t" style="left:226.7px;top:227.0px;font-size:14.2px;line-height:14.2px;color:#555555;font-weight:normal;font-style:normal;">$28,709.8K</div>
<div class="r" style="left:420.3px;top:221.4px;width:7.8px;height:22.6px;background:#9bc6e3;"></div>
<div class="t" style="left:433.3px;top:227.0px;font-size:14.2px;line-height:14.2px;color:#555555;font-weight:normal;font-style:normal;">32</div>
<div class="r" style="left:640.2px;top:221.4px;width:58.0px;height:22.6px;background:#73a2cc;border:1px solid #6290be;"></div>
<div class="t" style="left:703.4px;top:227.0px;font-size:14.2px;line-height:14.2px;color:#555555;font-weight:normal;font-style:normal;">$3,338.3K</div>
<div class="t" style="left:26.0px;top:258.7px;font-size:14px;line-height:14px;color:#666666;font-weight:normal;font-style:normal;">Orci Luctus Et Limited</div>
<div class="t" style="left:206.7px;top:258.7px;font-size:14.2px;line-height:14.2px;color:#555555;font-weight:normal;font-style:normal;">$1,641.5K</div>
<div class="r" style="left:420.3px;top:253.2px;width:14.0px;height:22.6px;background:#8cb9db;"></div>
<div class="t" style="left:439.5px;top:258.7px;font-size:14.2px;line-height:14.2px;color:#555555;font-weight:normal;font-style:normal;">57</div>
<div class="r" style="left:640.2px;top:253.2px;width:48.3px;height:22.6px;background:#7fadd3;border:1px solid #6c9ac4;"></div>
<div class="t" style="left:693.7px;top:258.7px;font-size:14.2px;line-height:14.2px;color:#555555;font-weight:normal;font-style:normal;">$2,777.2K</div>
<div class="t" style="left:26.0px;top:290.5px;font-size:14px;line-height:14px;color:#666666;font-weight:normal;font-style:normal;">Nec Tempus Limited</div>
<div class="r" style="left:200.3px;top:284.9px;width:2.1px;height:22.6px;background:#a8d0ea;"></div>
<div class="t" style="left:207.6px;top:290.4px;font-size:14.2px;line-height:14.2px;color:#555555;font-weight:normal;font-style:normal;">$2,822.1K</div>
<div class="r" style="left:420.3px;top:284.9px;width:1.0px;height:22.6px;background:#abd2eb;"></div>
<div class="t" style="left:426.5px;top:290.4px;font-size:14.2px;line-height:14.2px;color:#555555;font-weight:normal;font-style:normal;">4</div>
<div class="r" style="left:640.2px;top:284.9px;width:48.2px;height:22.6px;background:#7fadd3;border:1px solid #6c9ac4;"></div>
<div class="t" style="left:693.6px;top:290.4px;font-size:14.2px;line-height:14.2px;color:#555555;font-weight:normal;font-style:normal;">$2,772.7K</div>
<div class="t" style="left:26.0px;top:322.2px;font-size:14px;line-height:14px;color:#666666;font-weight:normal;font-style:normal;">Metus Sit Amet Associates</div>
<div class="r" style="left:200.3px;top:316.6px;width:2.0px;height:22.6px;background:#a9d0ea;"></div>
<div class="t" style="left:207.5px;top:322.1px;font-size:14.2px;line-height:14.2px;color:#555555;font-weight:normal;font-style:normal;">$2,668.4K</div>
<div class="r" style="left:420.3px;top:316.6px;width:0.8px;height:22.6px;background:#abd2eb;"></div>
<div class="t" style="left:426.2px;top:322.1px;font-size:14.2px;line-height:14.2px;color:#555555;font-weight:normal;font-style:normal;">3</div>
<div class="r" style="left:640.2px;top:316.6px;width:40.6px;height:22.6px;background:#88b5d9;border:1px solid #74a1c9;"></div>
<div class="t" style="left:686.0px;top:322.1px;font-size:14.2px;line-height:14.2px;color:#555555;font-weight:normal;font-style:normal;">$2,334.0K</div>
<div class="t" style="left:26.0px;top:353.9px;font-size:14px;line-height:14px;color:#666666;font-weight:normal;font-style:normal;">Non Luctus Sit Ltd</div>
<div class="t" style="left:206.5px;top:353.9px;font-size:14.2px;line-height:14.2px;color:#555555;font-weight:normal;font-style:normal;">$1,412.9K</div>
<div class="r" style="left:420.3px;top:348.3px;width:1.0px;height:22.6px;background:#abd2eb;"></div>
<div class="t" style="left:426.5px;top:353.9px;font-size:14.2px;line-height:14.2px;color:#555555;font-weight:normal;font-style:normal;">4</div>
<div class="r" style="left:640.2px;top:348.3px;width:39.2px;height:22.6px;background:#8ab7da;border:1px solid #75a2ca;"></div>
<div class="t" style="left:684.6px;top:353.9px;font-size:14.2px;line-height:14.2px;color:#555555;font-weight:normal;font-style:normal;">$2,256.9K</div>
<div class="t" style="left:26.0px;top:385.6px;font-size:14px;line-height:14px;color:#666666;font-weight:normal;font-style:normal;">Est Congue Foundation</div>
<div class="r" style="left:200.3px;top:380.0px;width:4.0px;height:22.6px;background:#a4cde8;"></div>
<div class="t" style="left:209.5px;top:385.6px;font-size:14.2px;line-height:14.2px;color:#555555;font-weight:normal;font-style:normal;">$5,346.3K</div>
<div class="r" style="left:420.3px;top:380.0px;width:1.0px;height:22.6px;background:#abd2eb;"></div>
<div class="t" style="left:426.5px;top:385.6px;font-size:14.2px;line-height:14.2px;color:#555555;font-weight:normal;font-style:normal;">4</div>
<div class="r" style="left:640.2px;top:380.0px;width:35.3px;height:22.6px;background:#8ebbdd;border:1px solid #79a6cc;"></div>
<div class="t" style="left:680.7px;top:385.6px;font-size:14.2px;line-height:14.2px;color:#555555;font-weight:normal;font-style:normal;">$2,030.1K</div>
<div class="t" style="left:26.0px;top:417.3px;font-size:14px;line-height:14px;color:#666666;font-weight:normal;font-style:normal;">Molestie Sodales Mauris ..</div>
<div class="r" style="left:200.3px;top:411.8px;width:3.6px;height:22.6px;background:#a5cee8;"></div>
<div class="t" style="left:209.1px;top:417.3px;font-size:14.2px;line-height:14.2px;color:#555555;font-weight:normal;font-style:normal;">$4,928.2K</div>
<div class="r" style="left:420.3px;top:411.8px;width:1.0px;height:22.6px;background:#abd2eb;"></div>
<div class="t" style="left:426.5px;top:417.3px;font-size:14.2px;line-height:14.2px;color:#555555;font-weight:normal;font-style:normal;">4</div>
<div class="r" style="left:640.2px;top:411.8px;width:34.4px;height:22.6px;background:#8fbcde;border:1px solid #7aa7cd;"></div>
<div class="t" style="left:679.8px;top:417.3px;font-size:14.2px;line-height:14.2px;color:#555555;font-weight:normal;font-style:normal;">$1,977.6K</div>
<div class="t" style="left:206.8px;top:449.0px;font-size:14.2px;line-height:14.2px;color:#555555;font-weight:normal;font-style:normal;">$1,793.2K</div>
<div class="r" style="left:420.3px;top:443.5px;width:0.8px;height:22.6px;background:#abd2eb;"></div>
<div class="t" style="left:426.2px;top:449.0px;font-size:14.2px;line-height:14.2px;color:#555555;font-weight:normal;font-style:normal;">3</div>
<div class="r" style="left:640.2px;top:443.5px;width:32.3px;height:22.6px;background:#92bfdf;border:1px solid #7ca9ce;"></div>
<div class="t" style="left:677.7px;top:449.0px;font-size:14.2px;line-height:14.2px;color:#555555;font-weight:normal;font-style:normal;">$1,855.7K</div>
<div class="r" style="left:18.0px;top:25.0px;width:841.0px;height:2.0px;background:#d6d6d6;"></div>
<div class="r" style="left:18.0px;top:57.0px;width:841.0px;height:2.0px;background:#d6d6d6;"></div>
<div class="r" style="left:18.0px;top:89.0px;width:841.0px;height:2.0px;background:#d6d6d6;"></div>
<div class="r" style="left:18.0px;top:121.0px;width:841.0px;height:2.0px;background:#d6d6d6;"></div>
<div class="r" style="left:18.0px;top:152.0px;width:841.0px;height:2.0px;background:#d6d6d6;"></div>
<div class="r" style="left:18.0px;top:184.0px;width:841.0px;height:2.0px;background:#d6d6d6;"></div>
<div class="r" style="left:18.0px;top:216.0px;width:841.0px;height:2.0px;background:#d6d6d6;"></div>
<div class="r" style="left:18.0px;top:248.0px;width:841.0px;height:2.0px;background:#d6d6d6;"></div>
<div class="r" style="left:18.0px;top:279.0px;width:841.0px;height:2.0px;background:#d6d6d6;"></div>
<div class="r" style="left:18.0px;top:311.0px;width:841.0px;height:2.0px;background:#d6d6d6;"></div>
<div class="r" style="left:18.0px;top:343.0px;width:841.0px;height:2.0px;background:#d6d6d6;"></div>
<div class="r" style="left:18.0px;top:374.0px;width:841.0px;height:2.0px;background:#d6d6d6;"></div>
<div class="r" style="left:18.0px;top:406.0px;width:841.0px;height:2.0px;background:#d6d6d6;"></div>
<div class="r" style="left:18.0px;top:438.0px;width:841.0px;height:2.0px;background:#d6d6d6;"></div>
</div>
<div style="position:absolute;left:0;top:1063px;width:199px;height:16.2px;overflow:hidden;"><div class="t" style="left:26.0px;top:4.0px;font-size:14px;line-height:14px;color:#555555;font-weight:normal;font-style:normal;">Eget Volutpat Ornare Ass..</div></div>
<div class="r" style="left:18.0px;top:624.4px;width:841.0px;height:1.2px;background:#d6d6d6;"></div>
<div class="r" style="left:18.0px;top:1076.8px;width:841.0px;height:1.2px;background:#d0d0d0;"></div>
<div class="r" style="left:199.2px;top:625.0px;width:1.2px;height:493.8px;background:#d2d2d2;"></div>
<div class="r" style="left:419.2px;top:625.0px;width:1.2px;height:493.8px;background:#d2d2d2;"></div>
<div class="r" style="left:639.0px;top:625.0px;width:1.2px;height:493.8px;background:#d2d2d2;"></div>
<div class="r" style="left:858.5px;top:625.0px;width:1.2px;height:493.8px;background:#d2d2d2;"></div>
<div class="r" style="left:17.4px;top:625.0px;width:1.2px;height:452.4px;background:#e6e6e6;"></div>
<div class="r" style="left:420.4px;top:1078.0px;width:218.6px;height:40.8px;background:#f2f2f2;"></div>
<div class="t" style="left:9.3px;width:600px;text-align:center;top:1095.0px;font-size:14.1px;line-height:14.1px;color:#333333;font-weight:normal;font-style:normal;-webkit-text-stroke:0.45px #333333;">Spend</div>
<div class="t" style="left:229.7px;width:600px;text-align:center;top:1095.0px;font-size:14.1px;line-height:14.1px;color:#333333;font-weight:normal;font-style:normal;-webkit-text-stroke:0.45px #333333;">Total # of Transactions</div>
<div class="t" style="left:449.4px;width:600px;text-align:center;top:1095.0px;font-size:14.1px;line-height:14.1px;color:#333333;font-weight:normal;font-style:normal;-webkit-text-stroke:0.45px #333333;">Open Pipeline</div>
<div class="r" style="left:861.3px;top:624.7px;width:18.3px;height:452.7px;background:#ffffff;border:1px solid #d8d8d8;"></div>
<div class="r" style="left:861.3px;top:624.7px;width:18.3px;height:5.5px;background:transparent;border-top:1.5px solid #bdbdbd;border-bottom:1px solid #d0d0d0;"></div>
<div class="r" style="left:1490.4px;top:89.5px;width:200.0px;height:335.3px;background:#ffffff;border:1.3px solid #8a8a8a;"></div>
<div class="t" style="left:1290.4px;width:600px;text-align:center;top:99.8px;font-size:13px;line-height:13px;color:#a8a8a8;font-weight:normal;font-style:normal;">FILTERS</div>
<div class="t" style="left:1495.8px;top:129.7px;font-size:14.4px;line-height:14.4px;color:#333333;font-weight:normal;font-style:normal;-webkit-text-stroke:0.45px #333333;">Segment</div>
<div class="t" style="left:1498.0px;top:150.9px;font-size:14.2px;line-height:14.2px;color:#8a8a8a;font-weight:normal;font-style:normal;">All</div>
<div class="t" style="left:1495.8px;top:191.1px;font-size:14.4px;line-height:14.4px;color:#333333;font-weight:normal;font-style:normal;-webkit-text-stroke:0.45px #333333;">District</div>
<div class="t" style="left:1498.0px;top:212.3px;font-size:14.2px;line-height:14.2px;color:#8a8a8a;font-weight:normal;font-style:normal;">All</div>
<div class="t" style="left:1495.8px;top:252.1px;font-size:14.4px;line-height:14.4px;color:#333333;font-weight:normal;font-style:normal;-webkit-text-stroke:0.45px #333333;">State</div>
<div class="t" style="left:1498.0px;top:273.3px;font-size:14.2px;line-height:14.2px;color:#8a8a8a;font-weight:normal;font-style:normal;">Multiple values</div>
<div class="t" style="left:1495.8px;top:313.1px;font-size:14.4px;line-height:14.4px;color:#333333;font-weight:normal;font-style:normal;-webkit-text-stroke:0.45px #333333;letter-spacing:0.22px;">Territory Primary Owner</div>
<div class="t" style="left:1498.0px;top:334.3px;font-size:14.2px;line-height:14.2px;color:#8a8a8a;font-weight:normal;font-style:normal;">All</div>
<div class="t" style="left:1495.8px;top:373.9px;font-size:14.4px;line-height:14.4px;color:#333333;font-weight:normal;font-style:normal;-webkit-text-stroke:0.45px #333333;">Territory Name</div>
<div class="t" style="left:1498.0px;top:395.1px;font-size:14.2px;line-height:14.2px;color:#8a8a8a;font-weight:normal;font-style:normal;">All</div>
<div class="r" style="left:1490.0px;top:498.4px;width:200.7px;height:187.8px;background:#ffffff;border:1.5px solid #3c3c3c;"></div>
<div class="t" style="left:1290.3px;width:600px;text-align:center;top:508.3px;font-size:13px;line-height:13px;color:#a8a8a8;font-weight:normal;font-style:normal;">PARAMETERS:</div>
<div class="t" style="left:1495.8px;top:539.0px;font-size:14.4px;line-height:14.4px;color:#333333;font-weight:normal;font-style:normal;-webkit-text-stroke:0.45px #333333;">Sort By:</div>
<div class="t" style="left:1497.8px;top:558.4px;font-size:14.0px;line-height:14.0px;color:#8a8a8a;font-weight:normal;font-style:normal;">Open Pipeline</div>
<div class="t" style="left:1495.8px;top:601.8px;font-size:14.4px;line-height:14.4px;color:#333333;font-weight:normal;font-style:normal;-webkit-text-stroke:0.45px #333333;">Size Map By:</div>
<div class="t" style="left:1497.8px;top:621.8px;font-size:14.0px;line-height:14.0px;color:#8a8a8a;font-weight:normal;font-style:normal;">Open Pipeline</div>
<svg style="left:0;top:0" width="1704" height="1138" viewBox="0 0 1704 1138">
<defs><clipPath id="mc"><rect x="890.1" y="602.0" width="594.4" height="516.8"/></clipPath></defs>
<g clip-path="url(#mc)">
<rect x="890.1" y="602.0" width="594.4" height="516.8" fill="#e7e7e7"/>
<polygon points="1490.0,598.0 1452.9,598.0 1452.9,603.5 1449.2,625.3 1445.4,646.0 1434.9,662.4 1436.4,674.4 1430.4,684.8 1417.0,696.8 1409.5,708.7 1394.6,726.6 1379.6,744.6 1369.2,759.5 1373.7,735.6 1361.7,729.6 1349.8,729.6 1339.3,720.7 1327.3,711.7 1319.9,702.7 1315.4,696.8 1316.9,687.8 1312.4,687.8 1313.9,702.7 1319.9,717.7 1328.8,729.6 1328.8,744.6 1337.8,759.5 1346.8,771.5 1354.2,780.4 1360.2,789.4 1360.2,810.0 1352.0,829.6 1341.4,861.2 1326.7,878.1 1314.0,897.0 1305.6,920.3 1295.0,945.6 1284.5,962.4 1280.0,970.0 1284.4,978.3 1284.4,997.3 1279.6,1016.3 1289.1,1025.8 1293.9,1044.8 1303.3,1068.5 1315.2,1099.3 1305.0,1125.0 1490.0,1125.0" fill="#ffffff"/>
<polygon points="1272.9,692.7 1258.2,703.3 1247.6,720.1 1235.0,732.8 1232.9,749.7 1233.9,774.8 1236.0,795.0 1233.0,814.0 1228.0,830.0 1224.0,845.0 1238.0,858.0 1252.9,878.1 1257.1,907.6 1255.0,939.2 1255.0,964.6 1246.5,977.2 1250.7,979.3 1280.3,981.4 1284.5,962.4 1280.3,962.4 1282.4,932.9 1288.7,907.6 1301.4,880.2 1309.0,871.0 1300.0,862.0 1292.0,850.0 1292.0,838.0 1275.0,841.0 1257.0,836.0 1250.0,814.0 1262.0,800.0 1278.0,788.0 1291.0,772.0 1272.0,785.0 1254.0,789.0 1252.0,775.0 1258.0,760.0 1260.3,741.2 1264.5,724.4 1277.1,699.0" fill="#ffffff"/>
<polyline points="1389.6,623.0 1380.3,630.0 1360.2,646.0 1352.7,653.4 1334.8,662.4 1325.9,669.9 1319.9,678.8 1314.6,689.0" fill="none" stroke="#ffffff" stroke-width="3.4" stroke-linejoin="round" stroke-linecap="round"/>
<polyline points="1190.0,768.0 1186.0,778.0 1176.0,792.0 1166.0,806.0 1164.4,811.6 1172.0,818.0 1182.0,826.0 1191.8,834.8 1206.5,841.2 1227.6,847.5 1248.7,849.6" fill="none" stroke="#ffffff" stroke-width="3.6" stroke-linejoin="round" stroke-linecap="round"/>
<polyline points="1150.0,838.0 1170.7,843.3 1189.7,855.9 1202.3,868.6 1215.0,885.4 1227.6,898.1 1244.5,906.5 1256.0,908.0" fill="none" stroke="#ffffff" stroke-width="2.4" stroke-linejoin="round" stroke-linecap="round"/>
<polyline points="1185.0,905.0 1196.0,912.9 1210.7,923.4 1227.6,936.0 1240.3,948.7 1248.7,961.4 1254.0,966.0" fill="none" stroke="#ffffff" stroke-width="2.4" stroke-linejoin="round" stroke-linecap="round"/>
<polyline points="1140.0,925.0 1164.4,931.8 1181.2,940.3 1198.1,948.7 1215.0,959.2 1227.6,969.8 1236.0,982.4 1242.0,984.0" fill="none" stroke="#ffffff" stroke-width="2.6" stroke-linejoin="round" stroke-linecap="round"/>
<polyline points="1198.0,602.0 1204.0,612.0 1210.0,622.0 1225.0,638.0 1235.0,645.0 1242.0,652.0 1258.0,672.0 1272.9,692.7" fill="none" stroke="#ffffff" stroke-width="1.1" stroke-linejoin="round" stroke-linecap="round"/>
<polyline points="1111.6,852.0 1120.0,857.0 1128.5,864.4" fill="none" stroke="#ffffff" stroke-width="2.2" stroke-linejoin="round" stroke-linecap="round"/>
<polyline points="1258.0,748.0 1268.0,742.0 1280.0,735.0 1290.0,728.0" fill="none" stroke="#ffffff" stroke-width="1.6" stroke-linejoin="round" stroke-linecap="round"/>
<polyline points="1300.0,745.0 1296.0,752.0 1292.0,760.0" fill="none" stroke="#ffffff" stroke-width="1.2" stroke-linejoin="round" stroke-linecap="round"/>
<polyline points="1262.0,820.0 1275.0,815.0 1283.0,812.0" fill="none" stroke="#ffffff" stroke-width="1.6" stroke-linejoin="round" stroke-linecap="round"/>
<polyline points="1203.0,1085.0 1215.0,1083.0 1232.0,1080.0 1255.0,1077.0 1275.0,1074.0 1292.0,1072.0" fill="none" stroke="#ffffff" stroke-width="7" stroke-linejoin="round" stroke-linecap="round"/>
<polyline points="1197.9,1037.9 1210.0,1043.0 1219.2,1047.8 1214.3,1059.3 1217.6,1079.0" fill="none" stroke="#ffffff" stroke-width="2.6" stroke-linejoin="round" stroke-linecap="round"/>
<polyline points="1257.0,1049.0 1270.0,1058.0 1282.0,1068.0" fill="none" stroke="#ffffff" stroke-width="2.6" stroke-linejoin="round" stroke-linecap="round"/>
<polyline points="1282.0,1035.0 1289.0,1055.0 1296.0,1075.0 1304.0,1098.0" fill="none" stroke="#ffffff" stroke-width="3" stroke-linejoin="round" stroke-linecap="round"/>
<polyline points="1105.0,1023.0 1120.0,1027.0 1135.0,1032.0 1145.0,1040.0" fill="none" stroke="#ffffff" stroke-width="1.6" stroke-linejoin="round" stroke-linecap="round"/>
<polyline points="1270.0,691.6 1282.0,689.0 1293.0,686.0" fill="none" stroke="#ffffff" stroke-width="1.5" stroke-linejoin="round" stroke-linecap="round"/>
<polyline points="1232.0,765.0 1222.0,772.0 1214.0,780.0" fill="none" stroke="#ffffff" stroke-width="1.6" stroke-linejoin="round" stroke-linecap="round"/>
<polyline points="1234.0,735.0 1222.0,742.0 1212.0,750.0" fill="none" stroke="#ffffff" stroke-width="1.6" stroke-linejoin="round" stroke-linecap="round"/>
<polyline points="885.0,673.9 1296.4,673.9" fill="none" stroke="#ffffff" stroke-opacity="0.6" stroke-width="2.6" stroke-linejoin="round"/>
<polyline points="885.0,673.9 1296.4,673.9" fill="none" stroke="#555555" stroke-width="1.25" stroke-linejoin="round"/>
<polyline points="1296.4,673.9 1300.1,665.3 1305.0,662.0 1311.0,660.8 1320.1,660.8 1325.5,664.4 1329.2,661.7 1340.1,658.0 1352.8,652.6 1354.6,647.1 1365.6,639.8 1380.0,629.8 1387.4,625.3 1379.2,619.8 1377.4,610.7 1369.2,603.5 1364.0,598.0" fill="none" stroke="#ffffff" stroke-opacity="0.6" stroke-width="2.6" stroke-linejoin="round"/>
<polyline points="1296.4,673.9 1300.1,665.3 1305.0,662.0 1311.0,660.8 1320.1,660.8 1325.5,664.4 1329.2,661.7 1340.1,658.0 1352.8,652.6 1354.6,647.1 1365.6,639.8 1380.0,629.8 1387.4,625.3 1379.2,619.8 1377.4,610.7 1369.2,603.5 1364.0,598.0" fill="none" stroke="#555555" stroke-width="1.25" stroke-linejoin="round"/>
<polyline points="1296.4,673.9 1298.8,734.7 1304.6,814.0 1360.5,815.0" fill="none" stroke="#ffffff" stroke-opacity="0.6" stroke-width="2.6" stroke-linejoin="round"/>
<polyline points="1296.4,673.9 1298.8,734.7 1304.6,814.0 1360.5,815.0" fill="none" stroke="#555555" stroke-width="1.25" stroke-linejoin="round"/>
<polyline points="1310.5,865.7 1331.8,863.3" fill="none" stroke="#ffffff" stroke-opacity="0.6" stroke-width="2.6" stroke-linejoin="round"/>
<polyline points="1310.5,865.7 1331.8,863.3" fill="none" stroke="#555555" stroke-width="1.25" stroke-linejoin="round"/>
<polyline points="976.5,673.9 976.5,731.9 980.0,728.9 982.3,726.2 985.0,723.9 991.0,720.4 994.0,718.9 997.0,715.4 999.6,712.6 1003.0,710.9 1006.0,707.9 1008.2,705.1 1010.0,701.9 1013.9,700.9 1017.3,702.3 1019.9,704.9 1023.0,700.9 1025.9,696.9 1028.7,693.7 1031.9,690.9 1033.2,687.1 1035.9,684.0 1038.9,682.5 1039.9,688.0 1042.8,690.5 1045.8,693.0 1049.5,693.2 1052.8,695.0 1056.3,695.6 1059.8,696.4 1064.8,695.9 1067.8,692.9 1065.8,688.0 1069.8,685.0 1074.8,683.0 1079.8,685.5 1081.7,682.2 1084.8,680.0 1089.8,676.5 1095.7,679.0 1099.7,681.4 1102.7,685.0 1107.7,687.0 1111.7,686.0 1118.7,686.5 1119.7,690.0 1115.7,693.0 1118.7,697.0 1122.7,700.9 1123.7,704.9 1125.7,708.9 1126.7,714.9 1127.7,718.9 1133.7,718.4 1140.0,720.9 1143.6,723.4 1146.7,726.5 1150.6,728.6 1149.8,732.4 1148.3,735.8 1146.4,739.1 1149.4,743.4 1152.7,747.5 1156.7,749.4 1161.1,749.8 1165.4,750.5 1169.6,751.8 1172.7,754.6 1177.0,755.3 1180.1,758.1 1183.4,761.3 1187.5,763.4" fill="none" stroke="#ffffff" stroke-opacity="0.6" stroke-width="2.6" stroke-linejoin="round"/>
<polyline points="976.5,673.9 976.5,731.9 980.0,728.9 982.3,726.2 985.0,723.9 991.0,720.4 994.0,718.9 997.0,715.4 999.6,712.6 1003.0,710.9 1006.0,707.9 1008.2,705.1 1010.0,701.9 1013.9,700.9 1017.3,702.3 1019.9,704.9 1023.0,700.9 1025.9,696.9 1028.7,693.7 1031.9,690.9 1033.2,687.1 1035.9,684.0 1038.9,682.5 1039.9,688.0 1042.8,690.5 1045.8,693.0 1049.5,693.2 1052.8,695.0 1056.3,695.6 1059.8,696.4 1064.8,695.9 1067.8,692.9 1065.8,688.0 1069.8,685.0 1074.8,683.0 1079.8,685.5 1081.7,682.2 1084.8,680.0 1089.8,676.5 1095.7,679.0 1099.7,681.4 1102.7,685.0 1107.7,687.0 1111.7,686.0 1118.7,686.5 1119.7,690.0 1115.7,693.0 1118.7,697.0 1122.7,700.9 1123.7,704.9 1125.7,708.9 1126.7,714.9 1127.7,718.9 1133.7,718.4 1140.0,720.9 1143.6,723.4 1146.7,726.5 1150.6,728.6 1149.8,732.4 1148.3,735.8 1146.4,739.1 1149.4,743.4 1152.7,747.5 1156.7,749.4 1161.1,749.8 1165.4,750.5 1169.6,751.8 1172.7,754.6 1177.0,755.3 1180.1,758.1 1183.4,761.3 1187.5,763.4" fill="none" stroke="#555555" stroke-width="1.25" stroke-linejoin="round"/>
<polyline points="1127.7,718.9 1126.7,722.5 1125.6,726.1 1124.3,729.6 1122.7,733.0 1120.5,736.2 1119.7,739.9 1116.5,738.0 1114.2,735.2 1111.4,732.8 1108.3,730.8 1105.7,728.3 1102.4,726.6 1099.6,724.3 1096.9,721.8 1094.7,718.8 1091.6,716.9 1088.6,714.7 1086.1,712.0 1083.2,709.9 1080.2,707.8 1077.9,704.8 1074.8,702.9 1074.8,714.9 1072.8,718.1 1071.9,721.8 1069.8,724.9 1069.2,728.9 1068.8,732.9 1067.3,736.8 1065.8,740.8 1062.3,743.3 1059.5,746.5 1056.8,749.8 1054.3,752.8 1050.8,754.6 1049.1,758.4 1046.0,760.7 1043.2,763.3 1040.5,765.9 1038.9,769.5 1036.1,772.1 1034.3,775.5 1031.0,777.7 1028.9,780.8 1025.9,777.5 1022.4,774.8 1019.0,772.0 1016.7,774.7 1015.8,778.3 1013.4,781.1 1011.8,784.2 1010.2,787.4 1008.6,791.0 1007.3,794.8 1005.2,798.2 1003.6,801.8 1002.9,805.8 1001.4,809.4 998.7,811.7 997.0,814.9 993.7,816.6 991.5,819.3 988.0,817.9 984.7,816.3 981.0,815.4 977.3,814.9 974.5,812.8 972.0,810.3 969.8,807.5 966.4,806.0 964.4,803.0 961.9,800.6 961.0,805.2 959.6,809.6 957.5,813.8 956.8,817.4 954.1,820.2 953.7,823.9 952.0,827.1 950.3,830.3 948.7,833.5 946.1,836.4 945.4,840.3 942.8,843.2 940.7,846.3 938.2,849.2 936.3,852.5 934.8,856.0 932.2,858.6 931.0,862.1 928.7,864.9 926.7,867.9 923.8,870.4 922.3,873.7 919.4,875.9 918.2,879.6 915.8,882.3 913.5,885.0 910.8,887.4 910.1,891.0 908.6,894.2 907.3,897.5 906.3,901.0 910.8,905.7 908.9,909.0 907.0,912.3 904.0,914.8 901.6,917.4 899.1,920.0 896.4,922.3 893.3,924.3 891.4,927.4 888.0,929.4 885.0,932.0" fill="none" stroke="#ffffff" stroke-opacity="0.6" stroke-width="2.6" stroke-linejoin="round"/>
<polyline points="1127.7,718.9 1126.7,722.5 1125.6,726.1 1124.3,729.6 1122.7,733.0 1120.5,736.2 1119.7,739.9 1116.5,738.0 1114.2,735.2 1111.4,732.8 1108.3,730.8 1105.7,728.3 1102.4,726.6 1099.6,724.3 1096.9,721.8 1094.7,718.8 1091.6,716.9 1088.6,714.7 1086.1,712.0 1083.2,709.9 1080.2,707.8 1077.9,704.8 1074.8,702.9 1074.8,714.9 1072.8,718.1 1071.9,721.8 1069.8,724.9 1069.2,728.9 1068.8,732.9 1067.3,736.8 1065.8,740.8 1062.3,743.3 1059.5,746.5 1056.8,749.8 1054.3,752.8 1050.8,754.6 1049.1,758.4 1046.0,760.7 1043.2,763.3 1040.5,765.9 1038.9,769.5 1036.1,772.1 1034.3,775.5 1031.0,777.7 1028.9,780.8 1025.9,777.5 1022.4,774.8 1019.0,772.0 1016.7,774.7 1015.8,778.3 1013.4,781.1 1011.8,784.2 1010.2,787.4 1008.6,791.0 1007.3,794.8 1005.2,798.2 1003.6,801.8 1002.9,805.8 1001.4,809.4 998.7,811.7 997.0,814.9 993.7,816.6 991.5,819.3 988.0,817.9 984.7,816.3 981.0,815.4 977.3,814.9 974.5,812.8 972.0,810.3 969.8,807.5 966.4,806.0 964.4,803.0 961.9,800.6 961.0,805.2 959.6,809.6 957.5,813.8 956.8,817.4 954.1,820.2 953.7,823.9 952.0,827.1 950.3,830.3 948.7,833.5 946.1,836.4 945.4,840.3 942.8,843.2 940.7,846.3 938.2,849.2 936.3,852.5 934.8,856.0 932.2,858.6 931.0,862.1 928.7,864.9 926.7,867.9 923.8,870.4 922.3,873.7 919.4,875.9 918.2,879.6 915.8,882.3 913.5,885.0 910.8,887.4 910.1,891.0 908.6,894.2 907.3,897.5 906.3,901.0 910.8,905.7 908.9,909.0 907.0,912.3 904.0,914.8 901.6,917.4 899.1,920.0 896.4,922.3 893.3,924.3 891.4,927.4 888.0,929.4 885.0,932.0" fill="none" stroke="#555555" stroke-width="1.25" stroke-linejoin="round"/>
<polyline points="885.0,1023.4 904.0,1023.4 906.0,1022.5 1289.6,1023.0" fill="none" stroke="#ffffff" stroke-opacity="0.6" stroke-width="2.6" stroke-linejoin="round"/>
<polyline points="885.0,1023.4 904.0,1023.4 906.0,1022.5 1289.6,1023.0" fill="none" stroke="#555555" stroke-width="1.25" stroke-linejoin="round"/>
<polyline points="1187.5,763.4 1199.1,766.5 1188.6,775.0" fill="none" stroke="#ffffff" stroke-opacity="0.6" stroke-width="2.6" stroke-linejoin="round"/>
<polyline points="1187.5,763.4 1199.1,766.5 1188.6,775.0" fill="none" stroke="#555555" stroke-width="1.25" stroke-linejoin="round"/>
<text x="1152.7" y="706.2" style="font-family:Liberation Sans" font-size="15.2" fill="#8c8c8c" stroke="#ffffff" stroke-opacity="0.55" stroke-width="2" paint-order="stroke">Maryland</text>
<text x="1296.4" y="792.2" style="font-family:Liberation Sans" font-size="15.2" fill="#8c8c8c" stroke="#ffffff" stroke-opacity="0.55" stroke-width="2" paint-order="stroke">Delaware</text>
<text x="1057.5" y="892.0" style="font-family:Liberation Sans" font-size="15.6" fill="#8c8c8c" stroke="#ffffff" stroke-opacity="0.55" stroke-width="2" paint-order="stroke">Virginia</text>
<text x="1370.5" y="625.7" style="font-family:Liberation Sans" font-size="15.2" fill="#8c8c8c" stroke="#ffffff" stroke-opacity="0.55" stroke-width="2" paint-order="stroke">New Jersey</text>
<text x="1181.2" y="765.7" style="font-family:Liberation Sans" font-size="13.5" fill="#8c8c8c" stroke="#ffffff" stroke-opacity="0.55" stroke-width="2" paint-order="stroke">DC</text>
<text x="884.5" y="808.4" style="font-family:Liberation Sans" font-size="15.2" fill="#8c8c8c" stroke="#ffffff" stroke-opacity="0.55" stroke-width="2" paint-order="stroke">ia</text>
<circle cx="892.9" cy="611.7" r="1.7" fill="#4e79a7" fill-opacity="0.9"/>
<circle cx="914.8" cy="613.5" r="1.7" fill="#4e79a7" fill-opacity="0.9"/>
<circle cx="909.5" cy="622.6" r="1.7" fill="#4e79a7" fill-opacity="0.9"/>
<circle cx="896.3" cy="630.0" r="1.7" fill="#4e79a7" fill-opacity="0.9"/>
<circle cx="922.3" cy="604.2" r="1.7" fill="#4e79a7" fill-opacity="0.9"/>
<circle cx="928.5" cy="605.4" r="1.7" fill="#4e79a7" fill-opacity="0.9"/>
<circle cx="932.0" cy="608.9" r="1.7" fill="#4e79a7" fill-opacity="0.9"/>
<circle cx="931.1" cy="613.8" r="1.7" fill="#4e79a7" fill-opacity="0.9"/>
<circle cx="941.7" cy="610.0" r="1.7" fill="#4e79a7" fill-opacity="0.9"/>
<circle cx="941.7" cy="612.4" r="1.7" fill="#4e79a7" fill-opacity="0.9"/>
<circle cx="943.5" cy="604.2" r="1.7" fill="#4e79a7" fill-opacity="0.9"/>
<circle cx="937.6" cy="619.5" r="1.7" fill="#4e79a7" fill-opacity="0.9"/>
<circle cx="951.4" cy="619.1" r="1.7" fill="#4e79a7" fill-opacity="0.9"/>
<circle cx="964.1" cy="619.1" r="1.7" fill="#4e79a7" fill-opacity="0.9"/>
<circle cx="964.9" cy="622.6" r="1.7" fill="#4e79a7" fill-opacity="0.9"/>
<circle cx="970.7" cy="626.2" r="1.7" fill="#4e79a7" fill-opacity="0.9"/>
<circle cx="946.1" cy="631.5" r="1.7" fill="#4e79a7" fill-opacity="0.9"/>
<circle cx="952.3" cy="632.9" r="1.7" fill="#4e79a7" fill-opacity="0.9"/>
<circle cx="966.3" cy="631.5" r="1.7" fill="#4e79a7" fill-opacity="0.9"/>
<circle cx="960.5" cy="637.6" r="1.7" fill="#4e79a7" fill-opacity="0.9"/>
<circle cx="946.5" cy="640.3" r="1.7" fill="#4e79a7" fill-opacity="0.9"/>
<circle cx="966.7" cy="640.3" r="1.7" fill="#4e79a7" fill-opacity="0.9"/>
<circle cx="964.9" cy="645.2" r="1.7" fill="#4e79a7" fill-opacity="0.9"/>
<circle cx="927.6" cy="645.2" r="1.7" fill="#4e79a7" fill-opacity="0.9"/>
<circle cx="927.1" cy="649.9" r="1.7" fill="#4e79a7" fill-opacity="0.9"/>
<circle cx="956.3" cy="654.3" r="1.7" fill="#4e79a7" fill-opacity="0.9"/>
<circle cx="956.7" cy="657.0" r="1.7" fill="#4e79a7" fill-opacity="0.9"/>
<circle cx="940.5" cy="659.6" r="1.7" fill="#4e79a7" fill-opacity="0.9"/>
<circle cx="947.9" cy="664.0" r="1.7" fill="#4e79a7" fill-opacity="0.9"/>
<circle cx="969.3" cy="664.0" r="1.7" fill="#4e79a7" fill-opacity="0.9"/>
<circle cx="987.6" cy="663.1" r="1.7" fill="#4e79a7" fill-opacity="0.9"/>
<circle cx="1005.1" cy="652.6" r="1.7" fill="#4e79a7" fill-opacity="0.9"/>
<circle cx="1010.9" cy="641.7" r="1.7" fill="#4e79a7" fill-opacity="0.9"/>
<circle cx="1022.9" cy="630.7" r="1.7" fill="#4e79a7" fill-opacity="0.9"/>
<circle cx="1035.9" cy="630.6" r="1.7" fill="#4e79a7" fill-opacity="0.9"/>
<circle cx="1032.4" cy="615.1" r="1.7" fill="#4e79a7" fill-opacity="0.9"/>
<circle cx="1024.4" cy="605.4" r="1.7" fill="#4e79a7" fill-opacity="0.9"/>
<circle cx="1036.4" cy="603.3" r="1.7" fill="#4e79a7" fill-opacity="0.9"/>
<circle cx="985.7" cy="605.4" r="1.7" fill="#4e79a7" fill-opacity="0.9"/>
<circle cx="1051.7" cy="621.8" r="1.7" fill="#4e79a7" fill-opacity="0.9"/>
<circle cx="1065.3" cy="609.1" r="1.7" fill="#4e79a7" fill-opacity="0.9"/>
<circle cx="1058.8" cy="639.9" r="1.7" fill="#4e79a7" fill-opacity="0.9"/>
<circle cx="1072.5" cy="640.6" r="1.7" fill="#4e79a7" fill-opacity="0.9"/>
<circle cx="1016.2" cy="664.0" r="1.7" fill="#4e79a7" fill-opacity="0.9"/>
<circle cx="1041.7" cy="662.4" r="1.7" fill="#4e79a7" fill-opacity="0.9"/>
<circle cx="925.0" cy="672.3" r="1.7" fill="#4e79a7" fill-opacity="0.9"/>
<circle cx="941.2" cy="671.9" r="1.7" fill="#4e79a7" fill-opacity="0.9"/>
<circle cx="979.5" cy="642.9" r="2.6" fill="#4e79a7" fill-opacity="0.8"/>
<circle cx="1018.3" cy="637.6" r="2.6" fill="#4e79a7" fill-opacity="0.8"/>
<circle cx="944.0" cy="654.3" r="2.8" fill="#4e79a7" fill-opacity="0.8"/>
<circle cx="941.7" cy="626.5" r="2.6" fill="#4e79a7" fill-opacity="0.8"/>
<circle cx="1077.3" cy="607.3" r="1.7" fill="#fdb36e" fill-opacity="0.9"/>
<circle cx="1058.8" cy="619.1" r="1.7" fill="#fdb36e" fill-opacity="0.9"/>
<circle cx="1068.8" cy="622.6" r="1.7" fill="#fdb36e" fill-opacity="0.9"/>
<circle cx="1082.2" cy="626.7" r="1.7" fill="#fdb36e" fill-opacity="0.9"/>
<circle cx="1105.6" cy="650.3" r="1.7" fill="#fdb36e" fill-opacity="0.9"/>
<circle cx="1113.0" cy="662.6" r="1.7" fill="#fdb36e" fill-opacity="0.9"/>
<circle cx="1127.4" cy="666.1" r="1.7" fill="#fdb36e" fill-opacity="0.9"/>
<circle cx="1140.8" cy="669.5" r="1.7" fill="#fdb36e" fill-opacity="0.9"/>
<circle cx="1087.8" cy="670.4" r="1.7" fill="#fdb36e" fill-opacity="0.9"/>
<circle cx="1134.1" cy="649.1" r="2.2" fill="#fdb36e" fill-opacity="0.9"/>
<circle cx="1137.5" cy="636.2" r="1.7" fill="#fdb36e" fill-opacity="0.9"/>
<circle cx="1146.5" cy="636.2" r="1.7" fill="#fdb36e" fill-opacity="0.9"/>
<circle cx="1155.6" cy="623.7" r="1.7" fill="#fdb36e" fill-opacity="0.9"/>
<circle cx="1174.1" cy="619.7" r="1.7" fill="#fdb36e" fill-opacity="0.9"/>
<circle cx="1175.5" cy="629.9" r="1.7" fill="#fdb36e" fill-opacity="0.9"/>
<circle cx="1169.7" cy="650.3" r="1.7" fill="#fdb36e" fill-opacity="0.9"/>
<circle cx="1160.0" cy="659.6" r="1.7" fill="#fdb36e" fill-opacity="0.9"/>
<circle cx="1171.5" cy="661.7" r="1.7" fill="#fdb36e" fill-opacity="0.9"/>
<circle cx="1164.8" cy="604.7" r="1.7" fill="#fdb36e" fill-opacity="0.9"/>
<circle cx="1182.9" cy="671.2" r="1.7" fill="#fdb36e" fill-opacity="0.9"/>
<circle cx="1187.3" cy="630.0" r="1.7" fill="#fdb36e" fill-opacity="0.9"/>
<circle cx="1186.4" cy="657.9" r="1.7" fill="#fdb36e" fill-opacity="0.9"/>
<circle cx="1196.4" cy="604.4" r="1.7" fill="#fdb36e" fill-opacity="0.9"/>
<circle cx="1197.3" cy="609.8" r="1.7" fill="#fdb36e" fill-opacity="0.9"/>
<circle cx="1200.0" cy="612.6" r="1.7" fill="#fdb36e" fill-opacity="0.9"/>
<circle cx="1199.1" cy="616.2" r="1.7" fill="#fdb36e" fill-opacity="0.9"/>
<circle cx="1190.9" cy="618.0" r="1.7" fill="#fdb36e" fill-opacity="0.9"/>
<circle cx="1216.4" cy="612.6" r="1.7" fill="#fdb36e" fill-opacity="0.9"/>
<circle cx="1226.4" cy="608.0" r="1.7" fill="#fdb36e" fill-opacity="0.9"/>
<circle cx="1232.8" cy="605.3" r="1.7" fill="#fdb36e" fill-opacity="0.9"/>
<circle cx="1240.9" cy="604.9" r="1.7" fill="#fdb36e" fill-opacity="0.9"/>
<circle cx="1214.6" cy="620.7" r="1.7" fill="#fdb36e" fill-opacity="0.9"/>
<circle cx="1225.5" cy="625.3" r="1.7" fill="#fdb36e" fill-opacity="0.9"/>
<circle cx="1244.6" cy="624.4" r="1.7" fill="#fdb36e" fill-opacity="0.9"/>
<circle cx="1250.9" cy="625.3" r="1.7" fill="#fdb36e" fill-opacity="0.9"/>
<circle cx="1260.0" cy="625.3" r="1.7" fill="#fdb36e" fill-opacity="0.9"/>
<circle cx="1263.7" cy="622.6" r="1.7" fill="#fdb36e" fill-opacity="0.9"/>
<circle cx="1267.3" cy="612.6" r="1.7" fill="#fdb36e" fill-opacity="0.9"/>
<circle cx="1266.4" cy="617.1" r="1.7" fill="#fdb36e" fill-opacity="0.9"/>
<circle cx="1187.3" cy="629.8" r="1.7" fill="#fdb36e" fill-opacity="0.9"/>
<circle cx="1216.4" cy="630.7" r="1.7" fill="#fdb36e" fill-opacity="0.9"/>
<circle cx="1215.5" cy="635.3" r="1.7" fill="#fdb36e" fill-opacity="0.9"/>
<circle cx="1234.6" cy="630.7" r="1.7" fill="#fdb36e" fill-opacity="0.9"/>
<circle cx="1241.9" cy="631.7" r="1.7" fill="#fdb36e" fill-opacity="0.9"/>
<circle cx="1250.9" cy="638.4" r="2.6" fill="#fdb36e" fill-opacity="0.9"/>
<circle cx="1234.6" cy="638.9" r="1.7" fill="#fdb36e" fill-opacity="0.9"/>
<circle cx="1237.3" cy="643.5" r="1.7" fill="#fdb36e" fill-opacity="0.9"/>
<circle cx="1262.8" cy="639.8" r="1.7" fill="#fdb36e" fill-opacity="0.9"/>
<circle cx="1271.0" cy="630.7" r="1.7" fill="#fdb36e" fill-opacity="0.9"/>
<circle cx="1275.5" cy="630.7" r="1.7" fill="#fdb36e" fill-opacity="0.9"/>
<circle cx="1280.1" cy="630.7" r="1.7" fill="#fdb36e" fill-opacity="0.9"/>
<circle cx="1271.0" cy="641.7" r="1.7" fill="#fdb36e" fill-opacity="0.9"/>
<circle cx="1276.4" cy="644.4" r="1.7" fill="#fdb36e" fill-opacity="0.9"/>
<circle cx="1204.6" cy="641.7" r="2.6" fill="#fdb36e" fill-opacity="0.9"/>
<circle cx="1214.6" cy="646.2" r="2.6" fill="#fdb36e" fill-opacity="0.9"/>
<circle cx="1225.5" cy="653.5" r="1.7" fill="#fdb36e" fill-opacity="0.9"/>
<circle cx="1236.4" cy="657.1" r="1.7" fill="#fdb36e" fill-opacity="0.9"/>
<circle cx="1191.8" cy="649.8" r="1.7" fill="#fdb36e" fill-opacity="0.9"/>
<circle cx="1191.8" cy="655.3" r="1.7" fill="#fdb36e" fill-opacity="0.9"/>
<circle cx="1186.4" cy="658.0" r="1.7" fill="#fdb36e" fill-opacity="0.9"/>
<circle cx="1191.8" cy="664.4" r="1.7" fill="#fdb36e" fill-opacity="0.9"/>
<circle cx="1261.0" cy="650.8" r="1.7" fill="#fdb36e" fill-opacity="0.9"/>
<circle cx="1271.0" cy="658.9" r="1.7" fill="#fdb36e" fill-opacity="0.9"/>
<circle cx="1181.8" cy="671.7" r="1.7" fill="#fdb36e" fill-opacity="0.9"/>
<circle cx="1217.3" cy="672.2" r="1.7" fill="#fdb36e" fill-opacity="0.9"/>
<circle cx="1238.2" cy="672.9" r="1.7" fill="#fdb36e" fill-opacity="0.9"/>
<circle cx="1283.7" cy="605.3" r="3.2" fill="#76b7b2" fill-opacity="0.9"/>
<circle cx="1279.1" cy="610.4" r="1.8" fill="#76b7b2" fill-opacity="0.9"/>
<circle cx="1294.6" cy="612.6" r="1.8" fill="#76b7b2" fill-opacity="0.9"/>
<circle cx="1301.9" cy="614.0" r="1.8" fill="#76b7b2" fill-opacity="0.9"/>
<circle cx="1308.3" cy="614.7" r="1.8" fill="#76b7b2" fill-opacity="0.9"/>
<circle cx="1262.8" cy="603.5" r="1.8" fill="#76b7b2" fill-opacity="0.9"/>
<circle cx="1266.4" cy="603.5" r="1.8" fill="#76b7b2" fill-opacity="0.9"/>
<circle cx="1336.4" cy="605.3" r="1.8" fill="#76b7b2" fill-opacity="0.9"/>
<circle cx="1331.0" cy="610.7" r="1.8" fill="#76b7b2" fill-opacity="0.9"/>
<circle cx="1335.5" cy="612.6" r="1.8" fill="#76b7b2" fill-opacity="0.9"/>
<circle cx="1338.3" cy="615.3" r="1.8" fill="#76b7b2" fill-opacity="0.9"/>
<circle cx="1340.1" cy="617.1" r="1.8" fill="#76b7b2" fill-opacity="0.9"/>
<circle cx="1342.8" cy="618.0" r="1.8" fill="#76b7b2" fill-opacity="0.9"/>
<circle cx="1345.5" cy="610.7" r="1.8" fill="#76b7b2" fill-opacity="0.9"/>
<circle cx="1351.9" cy="608.0" r="1.8" fill="#76b7b2" fill-opacity="0.9"/>
<circle cx="1355.6" cy="613.5" r="1.8" fill="#76b7b2" fill-opacity="0.9"/>
<circle cx="1357.4" cy="603.5" r="1.8" fill="#76b7b2" fill-opacity="0.9"/>
<circle cx="1367.4" cy="607.1" r="1.8" fill="#76b7b2" fill-opacity="0.9"/>
<circle cx="1325.5" cy="621.6" r="1.8" fill="#76b7b2" fill-opacity="0.9"/>
<circle cx="1316.4" cy="622.6" r="1.8" fill="#76b7b2" fill-opacity="0.9"/>
<circle cx="1320.1" cy="627.1" r="1.8" fill="#76b7b2" fill-opacity="0.9"/>
<circle cx="1331.0" cy="628.0" r="1.8" fill="#76b7b2" fill-opacity="0.9"/>
<circle cx="1334.6" cy="628.0" r="1.8" fill="#76b7b2" fill-opacity="0.9"/>
<circle cx="1340.1" cy="625.3" r="1.8" fill="#76b7b2" fill-opacity="0.9"/>
<circle cx="1345.5" cy="626.2" r="1.8" fill="#76b7b2" fill-opacity="0.9"/>
<circle cx="1353.7" cy="621.6" r="1.8" fill="#76b7b2" fill-opacity="0.9"/>
<circle cx="1357.4" cy="625.3" r="1.8" fill="#76b7b2" fill-opacity="0.9"/>
<circle cx="1361.9" cy="622.6" r="1.8" fill="#76b7b2" fill-opacity="0.9"/>
<circle cx="1369.2" cy="621.6" r="1.8" fill="#76b7b2" fill-opacity="0.9"/>
<circle cx="1371.0" cy="628.9" r="1.8" fill="#76b7b2" fill-opacity="0.9"/>
<circle cx="1287.3" cy="626.2" r="1.8" fill="#76b7b2" fill-opacity="0.9"/>
<circle cx="1291.9" cy="624.4" r="1.8" fill="#76b7b2" fill-opacity="0.9"/>
<circle cx="1285.5" cy="631.7" r="1.8" fill="#76b7b2" fill-opacity="0.9"/>
<circle cx="1298.2" cy="632.6" r="1.8" fill="#76b7b2" fill-opacity="0.9"/>
<circle cx="1311.0" cy="631.7" r="1.8" fill="#76b7b2" fill-opacity="0.9"/>
<circle cx="1331.0" cy="632.6" r="1.8" fill="#76b7b2" fill-opacity="0.9"/>
<circle cx="1340.1" cy="631.7" r="1.8" fill="#76b7b2" fill-opacity="0.9"/>
<circle cx="1344.6" cy="630.7" r="1.8" fill="#76b7b2" fill-opacity="0.9"/>
<circle cx="1351.9" cy="630.7" r="1.8" fill="#76b7b2" fill-opacity="0.9"/>
<circle cx="1354.6" cy="632.6" r="1.8" fill="#76b7b2" fill-opacity="0.9"/>
<circle cx="1360.1" cy="628.9" r="1.8" fill="#76b7b2" fill-opacity="0.9"/>
<circle cx="1365.6" cy="630.7" r="1.8" fill="#76b7b2" fill-opacity="0.9"/>
<circle cx="1279.1" cy="648.0" r="1.8" fill="#76b7b2" fill-opacity="0.9"/>
<circle cx="1284.6" cy="647.1" r="1.8" fill="#76b7b2" fill-opacity="0.9"/>
<circle cx="1293.7" cy="644.9" r="1.8" fill="#76b7b2" fill-opacity="0.9"/>
<circle cx="1299.2" cy="642.2" r="1.8" fill="#76b7b2" fill-opacity="0.9"/>
<circle cx="1303.7" cy="641.3" r="1.8" fill="#76b7b2" fill-opacity="0.9"/>
<circle cx="1311.0" cy="640.2" r="1.8" fill="#76b7b2" fill-opacity="0.9"/>
<circle cx="1311.0" cy="647.1" r="2.4" fill="#76b7b2" fill-opacity="0.9"/>
<circle cx="1323.7" cy="640.8" r="1.8" fill="#76b7b2" fill-opacity="0.9"/>
<circle cx="1331.0" cy="638.4" r="1.8" fill="#76b7b2" fill-opacity="0.9"/>
<circle cx="1336.4" cy="639.8" r="1.8" fill="#76b7b2" fill-opacity="0.9"/>
<circle cx="1339.2" cy="642.6" r="1.8" fill="#76b7b2" fill-opacity="0.9"/>
<circle cx="1341.9" cy="642.0" r="1.8" fill="#76b7b2" fill-opacity="0.9"/>
<circle cx="1344.6" cy="641.7" r="1.8" fill="#76b7b2" fill-opacity="0.9"/>
<circle cx="1351.9" cy="641.3" r="3.6" fill="#76b7b2" fill-opacity="0.9"/>
<circle cx="1336.4" cy="646.2" r="1.8" fill="#76b7b2" fill-opacity="0.9"/>
<circle cx="1331.0" cy="650.8" r="1.8" fill="#76b7b2" fill-opacity="0.9"/>
<circle cx="1334.6" cy="652.6" r="1.8" fill="#76b7b2" fill-opacity="0.9"/>
<circle cx="1340.1" cy="651.7" r="1.8" fill="#76b7b2" fill-opacity="0.9"/>
<circle cx="1341.0" cy="654.8" r="1.8" fill="#76b7b2" fill-opacity="0.9"/>
<circle cx="1318.3" cy="652.6" r="1.8" fill="#76b7b2" fill-opacity="0.9"/>
<circle cx="1321.9" cy="652.6" r="1.8" fill="#76b7b2" fill-opacity="0.9"/>
<circle cx="1327.4" cy="658.0" r="1.8" fill="#76b7b2" fill-opacity="0.9"/>
<circle cx="1334.6" cy="656.2" r="1.8" fill="#76b7b2" fill-opacity="0.9"/>
<circle cx="1312.8" cy="657.1" r="1.8" fill="#76b7b2" fill-opacity="0.9"/>
<circle cx="1298.2" cy="661.7" r="1.8" fill="#76b7b2" fill-opacity="0.9"/>
<circle cx="1302.8" cy="659.9" r="1.8" fill="#76b7b2" fill-opacity="0.9"/>
<circle cx="1292.8" cy="662.6" r="1.8" fill="#76b7b2" fill-opacity="0.9"/>
<circle cx="1280.1" cy="667.1" r="1.8" fill="#76b7b2" fill-opacity="0.9"/>
<circle cx="1284.6" cy="664.4" r="1.8" fill="#76b7b2" fill-opacity="0.9"/>
<circle cx="1276.4" cy="670.8" r="1.8" fill="#76b7b2" fill-opacity="0.9"/>
<circle cx="1327.4" cy="662.6" r="1.8" fill="#76b7b2" fill-opacity="0.9"/>
<circle cx="1361.9" cy="634.4" r="1.8" fill="#76b7b2" fill-opacity="0.9"/>
<circle cx="1369.2" cy="632.6" r="1.8" fill="#76b7b2" fill-opacity="0.9"/>
<circle cx="1380.1" cy="630.7" r="1.8" fill="#76b7b2" fill-opacity="0.9"/>
<circle cx="1420.1" cy="608.9" r="1.7" fill="#5f5a56" fill-opacity="0.9"/>
<circle cx="1429.2" cy="607.1" r="1.7" fill="#5f5a56" fill-opacity="0.9"/>
<circle cx="1434.7" cy="605.3" r="1.7" fill="#5f5a56" fill-opacity="0.9"/>
<circle cx="1442.0" cy="603.5" r="1.7" fill="#5f5a56" fill-opacity="0.9"/>
<circle cx="1447.4" cy="608.9" r="1.7" fill="#5f5a56" fill-opacity="0.9"/>
<circle cx="1451.1" cy="608.0" r="1.7" fill="#5f5a56" fill-opacity="0.9"/>
<circle cx="1449.2" cy="616.2" r="1.7" fill="#5f5a56" fill-opacity="0.9"/>
<circle cx="1425.6" cy="614.4" r="1.7" fill="#5f5a56" fill-opacity="0.9"/>
<circle cx="1434.7" cy="610.7" r="1.7" fill="#5f5a56" fill-opacity="0.9"/>
<circle cx="1380.1" cy="638.0" r="1.7" fill="#5f5a56" fill-opacity="0.9"/>
<circle cx="1375.6" cy="639.8" r="1.7" fill="#5f5a56" fill-opacity="0.9"/>
<circle cx="1367.4" cy="638.9" r="1.7" fill="#5f5a56" fill-opacity="0.9"/>
<circle cx="1361.9" cy="640.8" r="1.7" fill="#5f5a56" fill-opacity="0.9"/>
<circle cx="1358.3" cy="648.9" r="2.4" fill="#5f5a56" fill-opacity="0.9"/>
<circle cx="1354.6" cy="652.6" r="2.6" fill="#5f5a56" fill-opacity="0.9"/>
<circle cx="1361.0" cy="649.8" r="1.7" fill="#5f5a56" fill-opacity="0.9"/>
<circle cx="1365.6" cy="652.6" r="1.7" fill="#5f5a56" fill-opacity="0.9"/>
<circle cx="1370.1" cy="646.2" r="1.7" fill="#5f5a56" fill-opacity="0.9"/>
<circle cx="1374.7" cy="649.8" r="1.7" fill="#5f5a56" fill-opacity="0.9"/>
<circle cx="1380.1" cy="653.5" r="1.7" fill="#5f5a56" fill-opacity="0.9"/>
<circle cx="1386.5" cy="649.8" r="1.7" fill="#5f5a56" fill-opacity="0.9"/>
<circle cx="1340.1" cy="662.6" r="1.7" fill="#5f5a56" fill-opacity="0.9"/>
<circle cx="1347.4" cy="661.7" r="1.7" fill="#5f5a56" fill-opacity="0.9"/>
<circle cx="1351.9" cy="657.1" r="1.7" fill="#5f5a56" fill-opacity="0.9"/>
<circle cx="1359.2" cy="658.0" r="1.7" fill="#5f5a56" fill-opacity="0.9"/>
<circle cx="1362.8" cy="660.8" r="1.7" fill="#5f5a56" fill-opacity="0.9"/>
<circle cx="1367.4" cy="659.9" r="1.7" fill="#5f5a56" fill-opacity="0.9"/>
<circle cx="1365.6" cy="662.6" r="1.7" fill="#5f5a56" fill-opacity="0.9"/>
<circle cx="1372.8" cy="664.4" r="1.7" fill="#5f5a56" fill-opacity="0.9"/>
<circle cx="1374.7" cy="668.9" r="1.7" fill="#5f5a56" fill-opacity="0.9"/>
<circle cx="1349.2" cy="666.2" r="1.7" fill="#5f5a56" fill-opacity="0.9"/>
<circle cx="1351.9" cy="666.2" r="1.7" fill="#5f5a56" fill-opacity="0.9"/>
<circle cx="1343.7" cy="667.1" r="1.7" fill="#5f5a56" fill-opacity="0.9"/>
<circle cx="1329.2" cy="669.9" r="1.7" fill="#5f5a56" fill-opacity="0.9"/>
<circle cx="1324.6" cy="673.5" r="1.7" fill="#5f5a56" fill-opacity="0.9"/>
<circle cx="1352.8" cy="672.6" r="1.7" fill="#5f5a56" fill-opacity="0.9"/>
<circle cx="1357.4" cy="672.6" r="1.7" fill="#5f5a56" fill-opacity="0.9"/>
<circle cx="1354.6" cy="676.2" r="1.7" fill="#5f5a56" fill-opacity="0.9"/>
<circle cx="1381.0" cy="682.6" r="1.7" fill="#5f5a56" fill-opacity="0.9"/>
<circle cx="1350.1" cy="685.3" r="1.7" fill="#5f5a56" fill-opacity="0.9"/>
<circle cx="1350.1" cy="689.0" r="1.7" fill="#5f5a56" fill-opacity="0.9"/>
<circle cx="1323.7" cy="691.1" r="1.7" fill="#5f5a56" fill-opacity="0.9"/>
<circle cx="1361.9" cy="693.5" r="1.7" fill="#5f5a56" fill-opacity="0.9"/>
<circle cx="1370.1" cy="696.2" r="1.7" fill="#5f5a56" fill-opacity="0.9"/>
<circle cx="1422.0" cy="687.1" r="1.7" fill="#5f5a56" fill-opacity="0.9"/>
<circle cx="1424.7" cy="684.4" r="1.7" fill="#5f5a56" fill-opacity="0.9"/>
<circle cx="1432.0" cy="670.8" r="1.7" fill="#5f5a56" fill-opacity="0.9"/>
<circle cx="1391.0" cy="608.0" r="1.7" fill="#5f5a56" fill-opacity="0.9"/>
<circle cx="1400.1" cy="604.4" r="1.7" fill="#5f5a56" fill-opacity="0.9"/>
<circle cx="1370.1" cy="604.4" r="1.7" fill="#e15759" fill-opacity="0.9"/>
<circle cx="1381.9" cy="606.2" r="1.7" fill="#e15759" fill-opacity="0.9"/>
<circle cx="1381.9" cy="609.8" r="1.7" fill="#e15759" fill-opacity="0.9"/>
<circle cx="1394.7" cy="604.9" r="1.7" fill="#e15759" fill-opacity="0.9"/>
<circle cx="1399.2" cy="604.9" r="1.7" fill="#e15759" fill-opacity="0.9"/>
<circle cx="1406.5" cy="612.6" r="1.7" fill="#e15759" fill-opacity="0.9"/>
<circle cx="1386.5" cy="618.0" r="1.7" fill="#e15759" fill-opacity="0.9"/>
<circle cx="1390.1" cy="630.4" r="1.7" fill="#e15759" fill-opacity="0.9"/>
<circle cx="1404.7" cy="635.3" r="1.7" fill="#e15759" fill-opacity="0.9"/>
<circle cx="1398.3" cy="640.2" r="1.7" fill="#e15759" fill-opacity="0.9"/>
<circle cx="1432.0" cy="631.7" r="1.7" fill="#e15759" fill-opacity="0.9"/>
<circle cx="1440.1" cy="635.3" r="1.7" fill="#e15759" fill-opacity="0.9"/>
<circle cx="1446.5" cy="628.0" r="1.7" fill="#e15759" fill-opacity="0.9"/>
<circle cx="1447.4" cy="632.6" r="1.7" fill="#e15759" fill-opacity="0.9"/>
<circle cx="1444.7" cy="646.2" r="1.7" fill="#e15759" fill-opacity="0.9"/>
<circle cx="1449.2" cy="622.6" r="1.7" fill="#e15759" fill-opacity="0.9"/>
<circle cx="1299.2" cy="677.5" r="2" fill="#f28e2b" fill-opacity="0.9"/>
<circle cx="1317.3" cy="671.3" r="2.6" fill="#f28e2b" fill-opacity="0.9"/>
<circle cx="1307.3" cy="685.0" r="2" fill="#f28e2b" fill-opacity="0.9"/>
<circle cx="1324.6" cy="664.4" r="2" fill="#f28e2b" fill-opacity="0.9"/>
<circle cx="1303.7" cy="667.1" r="1.8" fill="#f28e2b" fill-opacity="0.9"/>
<circle cx="1200.9" cy="680.8" r="1.7" fill="#b6992d" fill-opacity="0.9"/>
<circle cx="1204.6" cy="687.1" r="1.7" fill="#b6992d" fill-opacity="0.9"/>
<circle cx="1222.8" cy="685.9" r="1.7" fill="#b6992d" fill-opacity="0.9"/>
<circle cx="1190.9" cy="690.4" r="1.7" fill="#b6992d" fill-opacity="0.9"/>
<circle cx="1216.4" cy="690.8" r="1.7" fill="#b6992d" fill-opacity="0.9"/>
<circle cx="1244.6" cy="678.0" r="1.7" fill="#b6992d" fill-opacity="0.9"/>
<circle cx="1247.3" cy="676.2" r="1.7" fill="#b6992d" fill-opacity="0.9"/>
<circle cx="1263.7" cy="679.9" r="1.7" fill="#b6992d" fill-opacity="0.9"/>
<circle cx="1282.8" cy="687.1" r="2.4" fill="#b6992d" fill-opacity="0.9"/>
<circle cx="1292.8" cy="687.1" r="2.8" fill="#b6992d" fill-opacity="0.9"/>
<circle cx="1271.0" cy="694.4" r="1.7" fill="#b6992d" fill-opacity="0.9"/>
<circle cx="1243.7" cy="689.9" r="1.7" fill="#b6992d" fill-opacity="0.9"/>
<circle cx="1221.8" cy="694.4" r="1.7" fill="#b6992d" fill-opacity="0.9"/>
<circle cx="1181.8" cy="694.1" r="1.7" fill="#b6992d" fill-opacity="0.9"/>
<circle cx="1262.8" cy="697.7" r="1.7" fill="#b6992d" fill-opacity="0.9"/>
<circle cx="1240.0" cy="698.1" r="1.7" fill="#b6992d" fill-opacity="0.9"/>
<circle cx="1252.8" cy="699.0" r="1.7" fill="#b6992d" fill-opacity="0.9"/>
<circle cx="933.3" cy="677.6" r="1.6" fill="#75d46a" fill-opacity="0.9"/>
<circle cx="935.5" cy="684.6" r="2.2" fill="#75d46a" fill-opacity="0.9"/>
<circle cx="963.0" cy="681.3" r="1.6" fill="#75d46a" fill-opacity="0.9"/>
<circle cx="919.1" cy="700.2" r="1.6" fill="#75d46a" fill-opacity="0.9"/>
<circle cx="948.3" cy="698.4" r="1.6" fill="#75d46a" fill-opacity="0.9"/>
<circle cx="970.7" cy="705.0" r="1.6" fill="#75d46a" fill-opacity="0.9"/>
<circle cx="954.2" cy="711.2" r="1.6" fill="#75d46a" fill-opacity="0.9"/>
<circle cx="930.0" cy="716.7" r="1.6" fill="#75d46a" fill-opacity="0.9"/>
<circle cx="901.5" cy="723.0" r="1.6" fill="#75d46a" fill-opacity="0.9"/>
<circle cx="909.6" cy="723.0" r="1.6" fill="#75d46a" fill-opacity="0.9"/>
<circle cx="919.7" cy="725.5" r="1.6" fill="#75d46a" fill-opacity="0.9"/>
<circle cx="927.8" cy="738.2" r="1.6" fill="#75d46a" fill-opacity="0.9"/>
<circle cx="959.3" cy="744.1" r="1.6" fill="#75d46a" fill-opacity="0.9"/>
<circle cx="911.4" cy="755.1" r="1.6" fill="#75d46a" fill-opacity="0.9"/>
<circle cx="945.0" cy="762.6" r="1.6" fill="#75d46a" fill-opacity="0.9"/>
<circle cx="934.4" cy="784.3" r="1.6" fill="#75d46a" fill-opacity="0.9"/>
<circle cx="1020.1" cy="748.3" r="1.6" fill="#75d46a" fill-opacity="0.9"/>
<circle cx="1007.1" cy="755.1" r="1.6" fill="#75d46a" fill-opacity="0.9"/>
<circle cx="1015.7" cy="712.9" r="1.6" fill="#75d46a" fill-opacity="0.9"/>
<circle cx="1020.1" cy="705.0" r="1.6" fill="#75d46a" fill-opacity="0.9"/>
<circle cx="1085.4" cy="685.3" r="1.6" fill="#75d46a" fill-opacity="0.9"/>
<circle cx="1108.0" cy="703.9" r="2.2" fill="#75d46a" fill-opacity="0.9"/>
<circle cx="1095.9" cy="712.9" r="1.6" fill="#75d46a" fill-opacity="0.9"/>
<circle cx="1100.7" cy="713.6" r="1.6" fill="#75d46a" fill-opacity="0.9"/>
<circle cx="1114.1" cy="711.2" r="1.6" fill="#75d46a" fill-opacity="0.9"/>
<circle cx="1118.5" cy="713.6" r="1.6" fill="#75d46a" fill-opacity="0.9"/>
<circle cx="1116.8" cy="722.2" r="1.6" fill="#75d46a" fill-opacity="0.9"/>
<circle cx="1122.3" cy="706.1" r="1.6" fill="#75d46a" fill-opacity="0.9"/>
<circle cx="1127.8" cy="718.9" r="1.6" fill="#75d46a" fill-opacity="0.9"/>
<circle cx="1065.1" cy="694.7" r="1.6" fill="#75d46a" fill-opacity="0.9"/>
<circle cx="1036.6" cy="682.0" r="1.6" fill="#75d46a" fill-opacity="0.9"/>
<circle cx="1004.7" cy="676.9" r="1.6" fill="#b6992d" fill-opacity="0.9"/>
<circle cx="982.8" cy="681.3" r="1.6" fill="#b6992d" fill-opacity="0.9"/>
<circle cx="990.4" cy="684.8" r="1.6" fill="#b6992d" fill-opacity="0.9"/>
<circle cx="1038.1" cy="681.3" r="2.8" fill="#b6992d" fill-opacity="0.9"/>
<circle cx="1028.9" cy="694.7" r="1.6" fill="#b6992d" fill-opacity="0.9"/>
<circle cx="1014.2" cy="700.2" r="1.6" fill="#b6992d" fill-opacity="0.9"/>
<circle cx="1052.0" cy="694.1" r="1.6" fill="#b6992d" fill-opacity="0.9"/>
<circle cx="982.8" cy="709.4" r="1.6" fill="#b6992d" fill-opacity="0.9"/>
<circle cx="1128.4" cy="682.6" r="2.2" fill="#b6992d" fill-opacity="0.9"/>
<circle cx="1119.0" cy="741.7" r="1.6" fill="#b6992d" fill-opacity="0.9"/>
<circle cx="1124.5" cy="739.7" r="1.6" fill="#b6992d" fill-opacity="0.9"/>
<circle cx="1128.8" cy="739.5" r="1.6" fill="#b6992d" fill-opacity="0.9"/>
<circle cx="1124.0" cy="769.8" r="1.6" fill="#b6992d" fill-opacity="0.9"/>
<circle cx="1122.3" cy="786.5" r="1.6" fill="#b6992d" fill-opacity="0.9"/>
<circle cx="1105.1" cy="790.7" r="1.6" fill="#b6992d" fill-opacity="0.9"/>
<circle cx="1110.2" cy="835.7" r="1.6" fill="#b6992d" fill-opacity="0.9"/>
<circle cx="1132.8" cy="843.9" r="1.6" fill="#b6992d" fill-opacity="0.9"/>
<circle cx="1030.0" cy="848.9" r="3.5" fill="#b6992d" fill-opacity="0.9"/>
<circle cx="1011.3" cy="848.5" r="2" fill="#b6992d" fill-opacity="0.9"/>
<circle cx="1026.7" cy="834.2" r="1.6" fill="#b6992d" fill-opacity="0.9"/>
<circle cx="1033.3" cy="835.7" r="1.6" fill="#b6992d" fill-opacity="0.9"/>
<circle cx="1004.7" cy="864.7" r="1.6" fill="#b6992d" fill-opacity="0.9"/>
<circle cx="993.1" cy="878.1" r="1.6" fill="#b6992d" fill-opacity="0.9"/>
<circle cx="947.2" cy="885.6" r="1.6" fill="#b6992d" fill-opacity="0.9"/>
<circle cx="932.2" cy="888.5" r="1.6" fill="#b6992d" fill-opacity="0.9"/>
<circle cx="987.8" cy="894.6" r="1.6" fill="#b6992d" fill-opacity="0.9"/>
<circle cx="1078.8" cy="718.7" r="1.6" fill="#3f9a94" fill-opacity="0.9"/>
<circle cx="1096.3" cy="726.3" r="1.6" fill="#3f9a94" fill-opacity="0.9"/>
<circle cx="1090.4" cy="734.7" r="2" fill="#3f9a94" fill-opacity="0.9"/>
<circle cx="1099.6" cy="744.6" r="1.6" fill="#3f9a94" fill-opacity="0.9"/>
<circle cx="1087.8" cy="763.5" r="1.6" fill="#3f9a94" fill-opacity="0.9"/>
<circle cx="1060.7" cy="767.2" r="1.6" fill="#3f9a94" fill-opacity="0.9"/>
<circle cx="1055.3" cy="774.5" r="1.6" fill="#3f9a94" fill-opacity="0.9"/>
<circle cx="1048.7" cy="783.5" r="1.6" fill="#3f9a94" fill-opacity="0.9"/>
<circle cx="1064.7" cy="792.5" r="1.6" fill="#3f9a94" fill-opacity="0.9"/>
<circle cx="1037.2" cy="794.0" r="1.6" fill="#3f9a94" fill-opacity="0.9"/>
<circle cx="1026.7" cy="792.9" r="1.6" fill="#3f9a94" fill-opacity="0.9"/>
<circle cx="1050.9" cy="811.6" r="1.6" fill="#3f9a94" fill-opacity="0.9"/>
<circle cx="1035.5" cy="822.1" r="1.6" fill="#3f9a94" fill-opacity="0.9"/>
<circle cx="1020.1" cy="823.7" r="1.6" fill="#3f9a94" fill-opacity="0.9"/>
<circle cx="1023.4" cy="825.9" r="1.6" fill="#3f9a94" fill-opacity="0.9"/>
<circle cx="1065.6" cy="831.8" r="1.6" fill="#3f9a94" fill-opacity="0.9"/>
<circle cx="1092.2" cy="811.6" r="1.6" fill="#3f9a94" fill-opacity="0.9"/>
<circle cx="1105.8" cy="801.7" r="1.6" fill="#3f9a94" fill-opacity="0.9"/>
<circle cx="1112.4" cy="795.1" r="1.6" fill="#3f9a94" fill-opacity="0.9"/>
<circle cx="1121.2" cy="806.7" r="1.6" fill="#3f9a94" fill-opacity="0.9"/>
<circle cx="1127.8" cy="814.9" r="1.6" fill="#3f9a94" fill-opacity="0.9"/>
<circle cx="1027.4" cy="857.7" r="1.6" fill="#3f9a94" fill-opacity="0.9"/>
<circle cx="1044.5" cy="857.3" r="1.6" fill="#3f9a94" fill-opacity="0.9"/>
<circle cx="1063.4" cy="861.7" r="1.6" fill="#3f9a94" fill-opacity="0.9"/>
<circle cx="1073.5" cy="862.8" r="1.6" fill="#3f9a94" fill-opacity="0.9"/>
<circle cx="1049.3" cy="871.6" r="1.6" fill="#3f9a94" fill-opacity="0.9"/>
<circle cx="1083.4" cy="870.9" r="1.6" fill="#3f9a94" fill-opacity="0.9"/>
<circle cx="1082.1" cy="880.1" r="1.6" fill="#3f9a94" fill-opacity="0.9"/>
<circle cx="1094.1" cy="878.1" r="1.6" fill="#3f9a94" fill-opacity="0.9"/>
<circle cx="1113.5" cy="889.6" r="1.6" fill="#3f9a94" fill-opacity="0.9"/>
<circle cx="1114.6" cy="896.2" r="1.6" fill="#3f9a94" fill-opacity="0.9"/>
<circle cx="1117.4" cy="897.3" r="1.6" fill="#3f9a94" fill-opacity="0.9"/>
<circle cx="1017.9" cy="893.5" r="1.6" fill="#3f9a94" fill-opacity="0.9"/>
<circle cx="1026.7" cy="899.5" r="1.6" fill="#3f9a94" fill-opacity="0.9"/>
<circle cx="1078.3" cy="897.3" r="1.6" fill="#3f9a94" fill-opacity="0.9"/>
<circle cx="1127.5" cy="869.1" r="1.6" fill="#3f9a94" fill-opacity="0.9"/>
<circle cx="1028.9" cy="815.5" r="6.4" fill="#3f9a94" fill-opacity="0.7"/>
<circle cx="1155.3" cy="707.9" r="9.5" fill="#b6992d" fill-opacity="0.72"/>
<circle cx="1230.7" cy="712.8" r="10.5" fill="#b6992d" fill-opacity="0.72"/>
<circle cx="1253.5" cy="702.6" r="4.2" fill="#b6992d" fill-opacity="0.72"/>
<circle cx="1231.8" cy="724.4" r="5.3" fill="#b6992d" fill-opacity="0.72"/>
<circle cx="1226.5" cy="729.6" r="4" fill="#b6992d" fill-opacity="0.72"/>
<circle cx="1173.8" cy="735.3" r="5.3" fill="#b6992d" fill-opacity="0.72"/>
<circle cx="1173.8" cy="753.2" r="6.7" fill="#b6992d" fill-opacity="0.72"/>
<circle cx="1190.7" cy="787.6" r="9.5" fill="#b6992d" fill-opacity="0.72"/>
<circle cx="1169.6" cy="792.5" r="11" fill="#b6992d" fill-opacity="0.72"/>
<circle cx="1155.9" cy="819.2" r="3.8" fill="#b6992d" fill-opacity="0.72"/>
<circle cx="1149.6" cy="833.0" r="10.5" fill="#b6992d" fill-opacity="0.72"/>
<circle cx="1324.2" cy="821.8" r="4.6" fill="#b6992d" fill-opacity="0.72"/>
<circle cx="1188.6" cy="777.1" r="4" fill="#b6992d" fill-opacity="0.72"/>
<circle cx="1196.0" cy="760.6" r="3.5" fill="#b6992d" fill-opacity="0.72"/>
<circle cx="1128.5" cy="682.8" r="1.7" fill="#b6992d" fill-opacity="0.9"/>
<circle cx="1155.9" cy="684.9" r="1.7" fill="#b6992d" fill-opacity="0.9"/>
<circle cx="1175.9" cy="691.0" r="1.7" fill="#b6992d" fill-opacity="0.9"/>
<circle cx="1190.7" cy="690.2" r="1.7" fill="#b6992d" fill-opacity="0.9"/>
<circle cx="1200.8" cy="681.1" r="1.7" fill="#b6992d" fill-opacity="0.9"/>
<circle cx="1204.8" cy="686.8" r="1.7" fill="#b6992d" fill-opacity="0.9"/>
<circle cx="1222.9" cy="685.3" r="1.7" fill="#b6992d" fill-opacity="0.9"/>
<circle cx="1245.5" cy="679.0" r="1.7" fill="#b6992d" fill-opacity="0.9"/>
<circle cx="1247.6" cy="675.8" r="1.7" fill="#b6992d" fill-opacity="0.9"/>
<circle cx="1264.1" cy="679.6" r="1.7" fill="#b6992d" fill-opacity="0.9"/>
<circle cx="1282.4" cy="687.4" r="1.7" fill="#b6992d" fill-opacity="0.9"/>
<circle cx="1291.9" cy="686.4" r="1.7" fill="#b6992d" fill-opacity="0.9"/>
<circle cx="1270.4" cy="694.4" r="1.7" fill="#b6992d" fill-opacity="0.9"/>
<circle cx="1263.4" cy="698.0" r="1.7" fill="#b6992d" fill-opacity="0.9"/>
<circle cx="1142.2" cy="698.6" r="1.7" fill="#b6992d" fill-opacity="0.9"/>
<circle cx="1144.3" cy="705.0" r="1.7" fill="#b6992d" fill-opacity="0.9"/>
<circle cx="1177.6" cy="713.2" r="1.7" fill="#b6992d" fill-opacity="0.9"/>
<circle cx="1193.8" cy="712.8" r="1.7" fill="#b6992d" fill-opacity="0.9"/>
<circle cx="1209.7" cy="709.2" r="1.7" fill="#b6992d" fill-opacity="0.9"/>
<circle cx="1214.9" cy="712.8" r="1.7" fill="#b6992d" fill-opacity="0.9"/>
<circle cx="1221.3" cy="695.3" r="1.7" fill="#b6992d" fill-opacity="0.9"/>
<circle cx="1225.5" cy="698.0" r="1.7" fill="#b6992d" fill-opacity="0.9"/>
<circle cx="1206.5" cy="702.2" r="1.7" fill="#b6992d" fill-opacity="0.9"/>
<circle cx="1221.9" cy="700.1" r="1.7" fill="#b6992d" fill-opacity="0.9"/>
<circle cx="1196.0" cy="724.4" r="1.7" fill="#b6992d" fill-opacity="0.9"/>
<circle cx="1188.6" cy="730.7" r="1.7" fill="#b6992d" fill-opacity="0.9"/>
<circle cx="1185.4" cy="738.1" r="1.7" fill="#b6992d" fill-opacity="0.9"/>
<circle cx="1173.8" cy="722.2" r="1.7" fill="#b6992d" fill-opacity="0.9"/>
<circle cx="1167.5" cy="727.5" r="1.7" fill="#b6992d" fill-opacity="0.9"/>
<circle cx="1164.3" cy="734.9" r="1.7" fill="#b6992d" fill-opacity="0.9"/>
<circle cx="1154.8" cy="730.3" r="1.7" fill="#b6992d" fill-opacity="0.9"/>
<circle cx="1137.5" cy="733.8" r="1.7" fill="#b6992d" fill-opacity="0.9"/>
<circle cx="1141.8" cy="741.6" r="1.7" fill="#b6992d" fill-opacity="0.9"/>
<circle cx="1124.3" cy="739.1" r="1.7" fill="#b6992d" fill-opacity="0.9"/>
<circle cx="1128.5" cy="739.1" r="1.7" fill="#b6992d" fill-opacity="0.9"/>
<circle cx="1203.3" cy="731.1" r="1.7" fill="#b6992d" fill-opacity="0.9"/>
<circle cx="1208.6" cy="725.0" r="1.7" fill="#b6992d" fill-opacity="0.9"/>
<circle cx="1214.9" cy="725.0" r="1.7" fill="#b6992d" fill-opacity="0.9"/>
<circle cx="1218.1" cy="731.7" r="1.7" fill="#b6992d" fill-opacity="0.9"/>
<circle cx="1216.0" cy="736.0" r="1.7" fill="#b6992d" fill-opacity="0.9"/>
<circle cx="1224.4" cy="737.0" r="1.7" fill="#b6992d" fill-opacity="0.9"/>
<circle cx="1230.7" cy="739.1" r="1.7" fill="#b6992d" fill-opacity="0.9"/>
<circle cx="1206.5" cy="738.7" r="1.7" fill="#b6992d" fill-opacity="0.9"/>
<circle cx="1209.7" cy="744.4" r="1.7" fill="#b6992d" fill-opacity="0.9"/>
<circle cx="1203.3" cy="743.8" r="1.7" fill="#b6992d" fill-opacity="0.9"/>
<circle cx="1216.0" cy="742.7" r="1.7" fill="#b6992d" fill-opacity="0.9"/>
<circle cx="1221.3" cy="747.5" r="1.7" fill="#b6992d" fill-opacity="0.9"/>
<circle cx="1222.3" cy="749.7" r="1.7" fill="#b6992d" fill-opacity="0.9"/>
<circle cx="1230.7" cy="747.1" r="1.7" fill="#b6992d" fill-opacity="0.9"/>
<circle cx="1205.4" cy="753.9" r="1.7" fill="#b6992d" fill-opacity="0.9"/>
<circle cx="1199.1" cy="750.1" r="1.7" fill="#b6992d" fill-opacity="0.9"/>
<circle cx="1192.8" cy="754.9" r="1.7" fill="#b6992d" fill-opacity="0.9"/>
<circle cx="1185.4" cy="751.8" r="1.7" fill="#b6992d" fill-opacity="0.9"/>
<circle cx="1178.0" cy="745.0" r="1.7" fill="#b6992d" fill-opacity="0.9"/>
<circle cx="1178.0" cy="759.1" r="1.7" fill="#b6992d" fill-opacity="0.9"/>
<circle cx="1149.6" cy="749.7" r="1.7" fill="#b6992d" fill-opacity="0.9"/>
<circle cx="1155.9" cy="754.3" r="1.7" fill="#b6992d" fill-opacity="0.9"/>
<circle cx="1159.0" cy="759.1" r="1.7" fill="#b6992d" fill-opacity="0.9"/>
<circle cx="1170.6" cy="764.4" r="1.7" fill="#b6992d" fill-opacity="0.9"/>
<circle cx="1163.3" cy="766.5" r="1.7" fill="#b6992d" fill-opacity="0.9"/>
<circle cx="1153.8" cy="766.1" r="1.7" fill="#b6992d" fill-opacity="0.9"/>
<circle cx="1171.7" cy="771.8" r="1.7" fill="#b6992d" fill-opacity="0.9"/>
<circle cx="1165.4" cy="771.8" r="1.7" fill="#b6992d" fill-opacity="0.9"/>
<circle cx="1154.8" cy="772.9" r="1.7" fill="#b6992d" fill-opacity="0.9"/>
<circle cx="1174.9" cy="775.0" r="1.7" fill="#b6992d" fill-opacity="0.9"/>
<circle cx="1183.3" cy="768.6" r="1.7" fill="#b6992d" fill-opacity="0.9"/>
<circle cx="1196.0" cy="771.8" r="1.7" fill="#b6992d" fill-opacity="0.9"/>
<circle cx="1201.2" cy="770.7" r="1.7" fill="#b6992d" fill-opacity="0.9"/>
<circle cx="1213.9" cy="760.6" r="1.7" fill="#b6992d" fill-opacity="0.9"/>
<circle cx="1217.0" cy="763.4" r="1.7" fill="#b6992d" fill-opacity="0.9"/>
<circle cx="1225.5" cy="771.8" r="1.7" fill="#b6992d" fill-opacity="0.9"/>
<circle cx="1235.0" cy="757.0" r="1.7" fill="#b6992d" fill-opacity="0.9"/>
<circle cx="1251.8" cy="757.0" r="1.7" fill="#b6992d" fill-opacity="0.9"/>
<circle cx="1258.2" cy="759.1" r="1.7" fill="#b6992d" fill-opacity="0.9"/>
<circle cx="1138.0" cy="777.5" r="1.7" fill="#b6992d" fill-opacity="0.9"/>
<circle cx="1150.2" cy="781.9" r="1.7" fill="#b6992d" fill-opacity="0.9"/>
<circle cx="1144.3" cy="785.1" r="1.7" fill="#b6992d" fill-opacity="0.9"/>
<circle cx="1122.1" cy="786.6" r="1.7" fill="#b6992d" fill-opacity="0.9"/>
<circle cx="1140.1" cy="788.7" r="1.7" fill="#b6992d" fill-opacity="0.9"/>
<circle cx="1105.3" cy="790.8" r="1.7" fill="#b6992d" fill-opacity="0.9"/>
<circle cx="1163.3" cy="779.2" r="1.7" fill="#b6992d" fill-opacity="0.9"/>
<circle cx="1175.9" cy="779.8" r="1.7" fill="#b6992d" fill-opacity="0.9"/>
<circle cx="1167.5" cy="779.2" r="1.7" fill="#b6992d" fill-opacity="0.9"/>
<circle cx="1199.1" cy="796.1" r="1.7" fill="#b6992d" fill-opacity="0.9"/>
<circle cx="1190.3" cy="801.3" r="1.7" fill="#b6992d" fill-opacity="0.9"/>
<circle cx="1193.8" cy="807.7" r="1.7" fill="#b6992d" fill-opacity="0.9"/>
<circle cx="1166.4" cy="807.7" r="1.7" fill="#b6992d" fill-opacity="0.9"/>
<circle cx="1162.2" cy="803.4" r="1.7" fill="#b6992d" fill-opacity="0.9"/>
<circle cx="1205.4" cy="781.7" r="1.7" fill="#b6992d" fill-opacity="0.9"/>
<circle cx="1209.7" cy="806.6" r="1.7" fill="#b6992d" fill-opacity="0.9"/>
<circle cx="1211.8" cy="811.4" r="1.7" fill="#b6992d" fill-opacity="0.9"/>
<circle cx="1213.9" cy="817.1" r="1.7" fill="#b6992d" fill-opacity="0.9"/>
<circle cx="1225.5" cy="798.2" r="1.7" fill="#b6992d" fill-opacity="0.9"/>
<circle cx="1226.5" cy="805.5" r="1.7" fill="#b6992d" fill-opacity="0.9"/>
<circle cx="1231.8" cy="810.2" r="1.7" fill="#b6992d" fill-opacity="0.9"/>
<circle cx="1238.1" cy="820.3" r="1.7" fill="#b6992d" fill-opacity="0.9"/>
<circle cx="1227.6" cy="826.6" r="1.7" fill="#b6992d" fill-opacity="0.9"/>
<circle cx="1222.3" cy="833.0" r="1.7" fill="#b6992d" fill-opacity="0.9"/>
<circle cx="1208.6" cy="835.1" r="1.7" fill="#b6992d" fill-opacity="0.9"/>
<circle cx="1189.0" cy="826.6" r="1.7" fill="#b6992d" fill-opacity="0.9"/>
<circle cx="1176.3" cy="835.1" r="1.7" fill="#b6992d" fill-opacity="0.9"/>
<circle cx="1107.4" cy="835.7" r="1.7" fill="#b6992d" fill-opacity="0.9"/>
<circle cx="1111.6" cy="835.7" r="1.7" fill="#b6992d" fill-opacity="0.9"/>
<circle cx="1132.7" cy="844.1" r="1.7" fill="#b6992d" fill-opacity="0.9"/>
<circle cx="1135.4" cy="861.4" r="1.7" fill="#b6992d" fill-opacity="0.9"/>
<circle cx="1151.7" cy="872.6" r="1.7" fill="#b6992d" fill-opacity="0.9"/>
<circle cx="1203.3" cy="873.0" r="1.7" fill="#b6992d" fill-opacity="0.9"/>
<circle cx="1212.4" cy="870.5" r="1.7" fill="#b6992d" fill-opacity="0.9"/>
<circle cx="1221.3" cy="857.2" r="1.7" fill="#b6992d" fill-opacity="0.9"/>
<circle cx="1237.1" cy="874.1" r="1.7" fill="#b6992d" fill-opacity="0.9"/>
<circle cx="1259.2" cy="778.8" r="1.7" fill="#b6992d" fill-opacity="0.9"/>
<circle cx="1270.8" cy="780.2" r="1.7" fill="#b6992d" fill-opacity="0.9"/>
<circle cx="1283.5" cy="791.8" r="1.7" fill="#b6992d" fill-opacity="0.9"/>
<circle cx="1269.8" cy="723.3" r="1.7" fill="#b6992d" fill-opacity="0.9"/>
<circle cx="1272.9" cy="731.1" r="1.7" fill="#b6992d" fill-opacity="0.9"/>
<circle cx="1279.2" cy="739.1" r="1.7" fill="#b6992d" fill-opacity="0.9"/>
<circle cx="1285.6" cy="707.5" r="1.7" fill="#b6992d" fill-opacity="0.9"/>
<circle cx="1290.8" cy="732.8" r="1.7" fill="#b6992d" fill-opacity="0.9"/>
<circle cx="1293.0" cy="767.6" r="1.7" fill="#b6992d" fill-opacity="0.9"/>
<circle cx="1285.2" cy="798.6" r="1.7" fill="#b6992d" fill-opacity="0.9"/>
<circle cx="1270.8" cy="802.4" r="1.7" fill="#b6992d" fill-opacity="0.9"/>
<circle cx="1187.5" cy="767.0" r="2.2" fill="#f28e2b" fill-opacity="0.9"/>
<circle cx="1317.2" cy="671.2" r="2.2" fill="#f28e2b" fill-opacity="0.9"/>
<circle cx="1299.3" cy="677.5" r="2" fill="#f28e2b" fill-opacity="0.9"/>
<circle cx="1307.7" cy="684.7" r="2" fill="#f28e2b" fill-opacity="0.9"/>
<circle cx="1318.9" cy="737.0" r="2" fill="#f28e2b" fill-opacity="0.9"/>
<circle cx="1317.6" cy="742.9" r="1.7" fill="#f28e2b" fill-opacity="0.9"/>
<circle cx="1327.3" cy="763.4" r="2" fill="#f28e2b" fill-opacity="0.9"/>
<circle cx="1327.8" cy="769.7" r="1.7" fill="#f28e2b" fill-opacity="0.9"/>
<circle cx="1311.9" cy="795.0" r="2" fill="#f28e2b" fill-opacity="0.9"/>
<circle cx="1315.5" cy="803.0" r="1.7" fill="#f28e2b" fill-opacity="0.9"/>
<circle cx="1314.7" cy="815.5" r="1.7" fill="#f28e2b" fill-opacity="0.9"/>
<circle cx="1330.3" cy="789.3" r="1.7" fill="#f28e2b" fill-opacity="0.9"/>
<circle cx="1324.6" cy="664.9" r="1.7" fill="#f28e2b" fill-opacity="0.9"/>
<circle cx="1112.7" cy="795.0" r="1.6" fill="#3f9a94" fill-opacity="0.9"/>
<circle cx="1106.3" cy="801.3" r="1.6" fill="#3f9a94" fill-opacity="0.9"/>
<circle cx="1121.1" cy="806.6" r="1.6" fill="#3f9a94" fill-opacity="0.9"/>
<circle cx="1127.4" cy="815.0" r="1.6" fill="#3f9a94" fill-opacity="0.9"/>
<circle cx="1101.1" cy="744.4" r="1.6" fill="#3f9a94" fill-opacity="0.9"/>
<circle cx="1127.4" cy="868.8" r="1.6" fill="#3f9a94" fill-opacity="0.9"/>
<circle cx="1135.4" cy="871.5" r="1.6" fill="#3f9a94" fill-opacity="0.9"/>
<circle cx="1323.5" cy="690.6" r="1.6" fill="#5f5a56" fill-opacity="0.9"/>
<circle cx="1329.9" cy="669.5" r="1.6" fill="#5f5a56" fill-opacity="0.9"/>
<circle cx="1324.6" cy="673.7" r="1.6" fill="#5f5a56" fill-opacity="0.9"/>
<circle cx="1026.2" cy="1006.2" r="10.3" fill="#b6992d" fill-opacity="0.72"/>
<circle cx="1004.5" cy="864.6" r="1.6" fill="#b6992d" fill-opacity="0.9"/>
<circle cx="993.1" cy="878.3" r="1.6" fill="#b6992d" fill-opacity="0.9"/>
<circle cx="932.1" cy="888.1" r="1.6" fill="#b6992d" fill-opacity="0.9"/>
<circle cx="946.9" cy="885.6" r="1.6" fill="#b6992d" fill-opacity="0.9"/>
<circle cx="987.4" cy="894.3" r="1.6" fill="#b6992d" fill-opacity="0.9"/>
<circle cx="1013.7" cy="910.7" r="1.6" fill="#b6992d" fill-opacity="0.9"/>
<circle cx="1056.4" cy="914.4" r="1.6" fill="#b6992d" fill-opacity="0.9"/>
<circle cx="921.1" cy="920.5" r="1.6" fill="#b6992d" fill-opacity="0.9"/>
<circle cx="942.4" cy="919.9" r="1.6" fill="#b6992d" fill-opacity="0.9"/>
<circle cx="959.3" cy="916.7" r="1.6" fill="#b6992d" fill-opacity="0.9"/>
<circle cx="938.3" cy="929.2" r="1.6" fill="#b6992d" fill-opacity="0.9"/>
<circle cx="942.8" cy="928.5" r="1.6" fill="#b6992d" fill-opacity="0.9"/>
<circle cx="947.9" cy="933.6" r="1.6" fill="#b6992d" fill-opacity="0.9"/>
<circle cx="965.0" cy="934.9" r="1.6" fill="#b6992d" fill-opacity="0.9"/>
<circle cx="973.0" cy="937.7" r="1.6" fill="#b6992d" fill-opacity="0.9"/>
<circle cx="983.5" cy="934.9" r="1.6" fill="#b6992d" fill-opacity="0.9"/>
<circle cx="993.1" cy="934.3" r="1.6" fill="#b6992d" fill-opacity="0.9"/>
<circle cx="1005.7" cy="929.7" r="2.4" fill="#b6992d" fill-opacity="0.9"/>
<circle cx="1019.8" cy="937.7" r="1.6" fill="#b6992d" fill-opacity="0.9"/>
<circle cx="927.3" cy="942.7" r="2.4" fill="#b6992d" fill-opacity="0.9"/>
<circle cx="936.7" cy="944.5" r="2.4" fill="#b6992d" fill-opacity="0.9"/>
<circle cx="896.2" cy="948.6" r="1.6" fill="#b6992d" fill-opacity="0.9"/>
<circle cx="955.4" cy="950.9" r="1.6" fill="#b6992d" fill-opacity="0.9"/>
<circle cx="964.8" cy="953.7" r="1.6" fill="#b6992d" fill-opacity="0.9"/>
<circle cx="992.6" cy="948.4" r="1.6" fill="#b6992d" fill-opacity="0.9"/>
<circle cx="1011.4" cy="956.4" r="1.6" fill="#b6992d" fill-opacity="0.9"/>
<circle cx="896.2" cy="960.1" r="1.6" fill="#b6992d" fill-opacity="0.9"/>
<circle cx="936.0" cy="961.2" r="1.6" fill="#b6992d" fill-opacity="0.9"/>
<circle cx="992.2" cy="964.0" r="1.6" fill="#b6992d" fill-opacity="0.9"/>
<circle cx="926.8" cy="973.1" r="1.6" fill="#b6992d" fill-opacity="0.9"/>
<circle cx="941.0" cy="974.2" r="1.6" fill="#b6992d" fill-opacity="0.9"/>
<circle cx="952.0" cy="975.4" r="1.6" fill="#b6992d" fill-opacity="0.9"/>
<circle cx="986.7" cy="979.3" r="1.6" fill="#b6992d" fill-opacity="0.9"/>
<circle cx="904.4" cy="984.1" r="1.6" fill="#b6992d" fill-opacity="0.9"/>
<circle cx="1050.2" cy="968.5" r="1.6" fill="#b6992d" fill-opacity="0.9"/>
<circle cx="1063.5" cy="969.7" r="1.6" fill="#b6992d" fill-opacity="0.9"/>
<circle cx="1051.8" cy="974.7" r="1.6" fill="#b6992d" fill-opacity="0.9"/>
<circle cx="1056.2" cy="941.6" r="1.6" fill="#b6992d" fill-opacity="0.9"/>
<circle cx="1070.8" cy="941.6" r="2.4" fill="#b6992d" fill-opacity="0.9"/>
<circle cx="1086.8" cy="953.2" r="1.6" fill="#b6992d" fill-opacity="0.9"/>
<circle cx="1085.2" cy="974.7" r="1.6" fill="#b6992d" fill-opacity="0.9"/>
<circle cx="1094.3" cy="978.3" r="1.6" fill="#b6992d" fill-opacity="0.9"/>
<circle cx="1141.1" cy="932.7" r="2.4" fill="#b6992d" fill-opacity="0.9"/>
<circle cx="1152.3" cy="935.4" r="2.4" fill="#b6992d" fill-opacity="0.9"/>
<circle cx="1155.8" cy="946.8" r="1.6" fill="#b6992d" fill-opacity="0.9"/>
<circle cx="1156.0" cy="949.1" r="1.6" fill="#b6992d" fill-opacity="0.9"/>
<circle cx="1162.8" cy="947.5" r="1.6" fill="#b6992d" fill-opacity="0.9"/>
<circle cx="1167.2" cy="951.4" r="1.6" fill="#b6992d" fill-opacity="0.9"/>
<circle cx="1142.1" cy="953.2" r="1.6" fill="#b6992d" fill-opacity="0.9"/>
<circle cx="1140.5" cy="965.8" r="1.6" fill="#b6992d" fill-opacity="0.9"/>
<circle cx="1135.9" cy="970.3" r="1.6" fill="#b6992d" fill-opacity="0.9"/>
<circle cx="1130.6" cy="976.5" r="1.6" fill="#b6992d" fill-opacity="0.9"/>
<circle cx="1155.8" cy="979.3" r="1.6" fill="#b6992d" fill-opacity="0.9"/>
<circle cx="1182.7" cy="970.1" r="1.6" fill="#b6992d" fill-opacity="0.9"/>
<circle cx="1150.3" cy="993.9" r="1.6" fill="#b6992d" fill-opacity="0.9"/>
<circle cx="1144.3" cy="1008.0" r="1.6" fill="#b6992d" fill-opacity="0.9"/>
<circle cx="1185.0" cy="1005.1" r="1.6" fill="#b6992d" fill-opacity="0.9"/>
<circle cx="1117.6" cy="1001.0" r="1.6" fill="#b6992d" fill-opacity="0.9"/>
<circle cx="1094.3" cy="1004.6" r="1.6" fill="#b6992d" fill-opacity="0.9"/>
<circle cx="1092.5" cy="1018.1" r="1.6" fill="#b6992d" fill-opacity="0.9"/>
<circle cx="1064.4" cy="996.6" r="1.6" fill="#b6992d" fill-opacity="0.9"/>
<circle cx="1041.1" cy="992.1" r="1.6" fill="#b6992d" fill-opacity="0.9"/>
<circle cx="983.0" cy="993.0" r="1.6" fill="#b6992d" fill-opacity="0.9"/>
<circle cx="983.5" cy="1001.0" r="1.6" fill="#b6992d" fill-opacity="0.9"/>
<circle cx="985.8" cy="1009.2" r="1.6" fill="#b6992d" fill-opacity="0.9"/>
<circle cx="992.4" cy="1016.5" r="1.6" fill="#b6992d" fill-opacity="0.9"/>
<circle cx="1001.1" cy="1014.7" r="1.6" fill="#b6992d" fill-opacity="0.9"/>
<circle cx="984.0" cy="1018.1" r="3" fill="#b6992d" fill-opacity="0.9"/>
<circle cx="1018.2" cy="1020.4" r="1.6" fill="#b6992d" fill-opacity="0.9"/>
<circle cx="960.0" cy="1021.5" r="1.6" fill="#b6992d" fill-opacity="0.9"/>
<circle cx="956.5" cy="1010.8" r="1.6" fill="#b6992d" fill-opacity="0.9"/>
<circle cx="942.8" cy="1007.4" r="1.6" fill="#b6992d" fill-opacity="0.9"/>
<circle cx="937.1" cy="1006.2" r="1.6" fill="#b6992d" fill-opacity="0.9"/>
<circle cx="938.7" cy="1005.1" r="1.6" fill="#b6992d" fill-opacity="0.9"/>
<circle cx="932.1" cy="1000.1" r="1.6" fill="#b6992d" fill-opacity="0.9"/>
<circle cx="909.0" cy="1013.8" r="1.6" fill="#b6992d" fill-opacity="0.9"/>
<circle cx="914.3" cy="1013.8" r="1.6" fill="#b6992d" fill-opacity="0.9"/>
<circle cx="1151.4" cy="873.0" r="1.6" fill="#b6992d" fill-opacity="0.9"/>
<circle cx="1063.2" cy="861.8" r="1.6" fill="#3f9a94" fill-opacity="0.9"/>
<circle cx="1073.5" cy="862.7" r="1.6" fill="#3f9a94" fill-opacity="0.9"/>
<circle cx="1049.8" cy="871.4" r="1.6" fill="#3f9a94" fill-opacity="0.9"/>
<circle cx="1083.3" cy="871.0" r="1.6" fill="#3f9a94" fill-opacity="0.9"/>
<circle cx="1081.7" cy="880.1" r="1.6" fill="#3f9a94" fill-opacity="0.9"/>
<circle cx="1094.3" cy="878.3" r="1.6" fill="#3f9a94" fill-opacity="0.9"/>
<circle cx="1113.5" cy="889.7" r="1.6" fill="#3f9a94" fill-opacity="0.9"/>
<circle cx="1114.6" cy="896.1" r="1.6" fill="#3f9a94" fill-opacity="0.9"/>
<circle cx="1116.9" cy="897.2" r="1.6" fill="#3f9a94" fill-opacity="0.9"/>
<circle cx="1078.8" cy="897.0" r="1.6" fill="#3f9a94" fill-opacity="0.9"/>
<circle cx="1018.2" cy="893.8" r="1.6" fill="#3f9a94" fill-opacity="0.9"/>
<circle cx="1026.9" cy="899.5" r="1.6" fill="#3f9a94" fill-opacity="0.9"/>
<circle cx="1127.9" cy="869.1" r="1.6" fill="#3f9a94" fill-opacity="0.9"/>
<circle cx="1135.4" cy="871.4" r="1.6" fill="#3f9a94" fill-opacity="0.9"/>
<circle cx="1151.4" cy="880.1" r="1.6" fill="#3f9a94" fill-opacity="0.9"/>
<circle cx="1149.1" cy="892.0" r="1.6" fill="#3f9a94" fill-opacity="0.9"/>
<circle cx="1159.2" cy="890.4" r="1.6" fill="#3f9a94" fill-opacity="0.9"/>
<circle cx="1181.6" cy="889.2" r="1.6" fill="#3f9a94" fill-opacity="0.9"/>
<circle cx="1137.5" cy="903.4" r="2.4" fill="#3f9a94" fill-opacity="0.9"/>
<circle cx="1146.9" cy="902.3" r="2.4" fill="#3f9a94" fill-opacity="0.9"/>
<circle cx="1162.2" cy="906.8" r="2.4" fill="#3f9a94" fill-opacity="0.9"/>
<circle cx="1153.7" cy="916.2" r="3" fill="#3f9a94" fill-opacity="0.9"/>
<circle cx="1163.8" cy="917.1" r="1.6" fill="#3f9a94" fill-opacity="0.9"/>
<circle cx="1177.5" cy="918.9" r="1.6" fill="#3f9a94" fill-opacity="0.9"/>
<circle cx="1135.2" cy="919.9" r="2.4" fill="#3f9a94" fill-opacity="0.9"/>
<circle cx="1123.3" cy="923.3" r="1.6" fill="#3f9a94" fill-opacity="0.9"/>
<circle cx="1112.4" cy="915.3" r="1.6" fill="#3f9a94" fill-opacity="0.9"/>
<circle cx="1128.6" cy="908.0" r="1.6" fill="#3f9a94" fill-opacity="0.9"/>
<circle cx="1083.3" cy="919.9" r="1.6" fill="#3f9a94" fill-opacity="0.9"/>
<circle cx="1105.7" cy="937.0" r="1.6" fill="#3f9a94" fill-opacity="0.9"/>
<circle cx="1095.9" cy="942.2" r="1.6" fill="#3f9a94" fill-opacity="0.9"/>
<circle cx="1186.6" cy="925.8" r="1.6" fill="#3f9a94" fill-opacity="0.9"/>
<circle cx="1185.0" cy="937.2" r="1.6" fill="#3f9a94" fill-opacity="0.9"/>
<circle cx="1227.0" cy="1003.7" r="9" fill="#3f9a94" fill-opacity="0.7"/>
<circle cx="1280.3" cy="989.5" r="5.2" fill="#3f9a94" fill-opacity="0.7"/>
<circle cx="1181.9" cy="889.4" r="1.6" fill="#3f9a94" fill-opacity="0.9"/>
<circle cx="1228.1" cy="905.3" r="1.6" fill="#3f9a94" fill-opacity="0.9"/>
<circle cx="1239.8" cy="914.3" r="1.6" fill="#3f9a94" fill-opacity="0.9"/>
<circle cx="1248.5" cy="913.1" r="1.6" fill="#3f9a94" fill-opacity="0.9"/>
<circle cx="1209.2" cy="916.2" r="1.6" fill="#3f9a94" fill-opacity="0.9"/>
<circle cx="1187.6" cy="926.2" r="1.6" fill="#3f9a94" fill-opacity="0.9"/>
<circle cx="1200.2" cy="929.0" r="1.6" fill="#3f9a94" fill-opacity="0.9"/>
<circle cx="1208.0" cy="933.3" r="1.6" fill="#3f9a94" fill-opacity="0.9"/>
<circle cx="1185.2" cy="936.8" r="1.6" fill="#3f9a94" fill-opacity="0.9"/>
<circle cx="1216.8" cy="944.7" r="2.4" fill="#3f9a94" fill-opacity="0.9"/>
<circle cx="1226.7" cy="956.5" r="1.6" fill="#3f9a94" fill-opacity="0.9"/>
<circle cx="1238.8" cy="972.4" r="2.4" fill="#3f9a94" fill-opacity="0.9"/>
<circle cx="1228.6" cy="980.0" r="1.6" fill="#3f9a94" fill-opacity="0.9"/>
<circle cx="1256.4" cy="1004.9" r="2.4" fill="#3f9a94" fill-opacity="0.9"/>
<circle cx="1307.6" cy="888.9" r="1.6" fill="#3f9a94" fill-opacity="0.9"/>
<circle cx="1300.3" cy="897.0" r="1.6" fill="#3f9a94" fill-opacity="0.9"/>
<circle cx="1293.1" cy="916.2" r="1.6" fill="#3f9a94" fill-opacity="0.9"/>
<circle cx="1276.1" cy="945.8" r="1.6" fill="#3f9a94" fill-opacity="0.9"/>
<circle cx="1333.7" cy="872.1" r="1.6" fill="#3f9a94" fill-opacity="0.9"/>
<circle cx="1221.7" cy="857.4" r="1.6" fill="#b6992d" fill-opacity="0.9"/>
<circle cx="1297.6" cy="860.9" r="1.6" fill="#b6992d" fill-opacity="0.9"/>
<circle cx="1290.3" cy="866.4" r="1.6" fill="#b6992d" fill-opacity="0.9"/>
<circle cx="1212.7" cy="869.9" r="1.6" fill="#b6992d" fill-opacity="0.9"/>
<circle cx="1203.5" cy="873.5" r="1.6" fill="#b6992d" fill-opacity="0.9"/>
<circle cx="1236.9" cy="874.7" r="1.6" fill="#b6992d" fill-opacity="0.9"/>
<circle cx="1254.2" cy="882.8" r="1.6" fill="#b6992d" fill-opacity="0.9"/>
<circle cx="1244.0" cy="903.1" r="1.6" fill="#b6992d" fill-opacity="0.9"/>
<circle cx="1233.8" cy="948.2" r="2.4" fill="#b6992d" fill-opacity="0.9"/>
<circle cx="1240.5" cy="952.7" r="1.6" fill="#b6992d" fill-opacity="0.9"/>
<circle cx="1193.8" cy="955.8" r="1.6" fill="#b6992d" fill-opacity="0.9"/>
<circle cx="1182.4" cy="970.0" r="1.6" fill="#b6992d" fill-opacity="0.9"/>
<circle cx="1247.6" cy="970.7" r="3.2" fill="#b6992d" fill-opacity="0.9"/>
<circle cx="1252.6" cy="991.6" r="2.4" fill="#b6992d" fill-opacity="0.9"/>
<circle cx="1185.2" cy="1005.1" r="1.6" fill="#b6992d" fill-opacity="0.9"/>
<circle cx="1198.3" cy="1009.2" r="1.6" fill="#b6992d" fill-opacity="0.9"/>
<circle cx="1270.8" cy="780.0" r="1.6" fill="#b6992d" fill-opacity="0.9"/>
<circle cx="1259.2" cy="779.0" r="1.6" fill="#b6992d" fill-opacity="0.9"/>
<circle cx="1292.9" cy="767.4" r="1.6" fill="#b6992d" fill-opacity="0.9"/>
<circle cx="1270.8" cy="802.2" r="1.6" fill="#b6992d" fill-opacity="0.9"/>
<circle cx="1284.9" cy="799.0" r="1.6" fill="#b6992d" fill-opacity="0.9"/>
<circle cx="1308.1" cy="834.2" r="1.6" fill="#b6992d" fill-opacity="0.9"/>
<circle cx="1312.5" cy="825.4" r="1.6" fill="#b6992d" fill-opacity="0.9"/>
<circle cx="1330.2" cy="846.9" r="1.6" fill="#b6992d" fill-opacity="0.9"/>
<circle cx="1303.0" cy="852.2" r="1.6" fill="#b6992d" fill-opacity="0.9"/>
<circle cx="1297.8" cy="860.8" r="1.6" fill="#b6992d" fill-opacity="0.9"/>
<circle cx="1290.4" cy="866.5" r="1.6" fill="#b6992d" fill-opacity="0.9"/>
<circle cx="1357.7" cy="828.5" r="1.6" fill="#b6992d" fill-opacity="0.9"/>
<circle cx="1254.5" cy="882.7" r="1.6" fill="#b6992d" fill-opacity="0.9"/>
<circle cx="1243.8" cy="903.4" r="1.6" fill="#b6992d" fill-opacity="0.9"/>
<circle cx="1233.9" cy="947.7" r="2.2" fill="#b6992d" fill-opacity="0.9"/>
<circle cx="1240.2" cy="953.0" r="1.6" fill="#b6992d" fill-opacity="0.9"/>
<circle cx="1247.6" cy="970.5" r="3" fill="#b6992d" fill-opacity="0.9"/>
<circle cx="1252.4" cy="991.5" r="1.6" fill="#b6992d" fill-opacity="0.9"/>
<circle cx="1182.8" cy="969.8" r="1.6" fill="#b6992d" fill-opacity="0.9"/>
<circle cx="1193.4" cy="956.1" r="1.6" fill="#b6992d" fill-opacity="0.9"/>
<circle cx="1142.1" cy="953.0" r="1.6" fill="#b6992d" fill-opacity="0.9"/>
<circle cx="1135.8" cy="970.2" r="1.6" fill="#b6992d" fill-opacity="0.9"/>
<circle cx="1131.0" cy="976.2" r="1.6" fill="#b6992d" fill-opacity="0.9"/>
<circle cx="1155.4" cy="979.3" r="1.6" fill="#b6992d" fill-opacity="0.9"/>
<circle cx="1150.6" cy="993.7" r="1.6" fill="#b6992d" fill-opacity="0.9"/>
<circle cx="1140.5" cy="965.6" r="1.6" fill="#b6992d" fill-opacity="0.9"/>
<circle cx="1167.0" cy="950.8" r="1.6" fill="#b6992d" fill-opacity="0.9"/>
<circle cx="1163.2" cy="947.3" r="1.6" fill="#b6992d" fill-opacity="0.9"/>
<circle cx="1156.3" cy="946.6" r="1.6" fill="#b6992d" fill-opacity="0.9"/>
<circle cx="1156.3" cy="948.7" r="1.6" fill="#b6992d" fill-opacity="0.9"/>
<circle cx="1152.3" cy="935.0" r="2.4" fill="#b6992d" fill-opacity="0.9"/>
<circle cx="1141.1" cy="932.9" r="2.4" fill="#b6992d" fill-opacity="0.9"/>
<circle cx="1189.2" cy="827.1" r="1.6" fill="#b6992d" fill-opacity="0.9"/>
<circle cx="1176.5" cy="834.9" r="1.6" fill="#b6992d" fill-opacity="0.9"/>
<circle cx="1133.1" cy="844.4" r="1.6" fill="#b6992d" fill-opacity="0.9"/>
<circle cx="1135.8" cy="861.2" r="1.6" fill="#b6992d" fill-opacity="0.9"/>
<circle cx="1151.6" cy="872.8" r="1.6" fill="#b6992d" fill-opacity="0.9"/>
<circle cx="1151.2" cy="873.9" r="1.6" fill="#b6992d" fill-opacity="0.9"/>
<circle cx="1221.9" cy="857.4" r="1.6" fill="#b6992d" fill-opacity="0.9"/>
<circle cx="1212.8" cy="870.1" r="1.6" fill="#b6992d" fill-opacity="0.9"/>
<circle cx="1203.7" cy="873.9" r="1.6" fill="#b6992d" fill-opacity="0.9"/>
<circle cx="1237.0" cy="874.5" r="1.6" fill="#b6992d" fill-opacity="0.9"/>
<circle cx="1223.3" cy="833.4" r="1.6" fill="#b6992d" fill-opacity="0.9"/>
<circle cx="1228.2" cy="826.8" r="1.6" fill="#b6992d" fill-opacity="0.9"/>
<circle cx="1238.7" cy="820.5" r="1.6" fill="#b6992d" fill-opacity="0.9"/>
<circle cx="1334.0" cy="871.8" r="1.6" fill="#3f9a94" fill-opacity="0.9"/>
<circle cx="1307.7" cy="889.1" r="1.6" fill="#3f9a94" fill-opacity="0.9"/>
<circle cx="1299.9" cy="897.1" r="1.6" fill="#3f9a94" fill-opacity="0.9"/>
<circle cx="1292.9" cy="916.1" r="1.6" fill="#3f9a94" fill-opacity="0.9"/>
<circle cx="1276.1" cy="946.0" r="1.6" fill="#3f9a94" fill-opacity="0.9"/>
<circle cx="1128.0" cy="869.2" r="1.6" fill="#3f9a94" fill-opacity="0.9"/>
<circle cx="1135.8" cy="871.8" r="1.6" fill="#3f9a94" fill-opacity="0.9"/>
<circle cx="1151.2" cy="880.2" r="1.6" fill="#3f9a94" fill-opacity="0.9"/>
<circle cx="1149.1" cy="891.8" r="1.6" fill="#3f9a94" fill-opacity="0.9"/>
<circle cx="1159.0" cy="890.7" r="1.6" fill="#3f9a94" fill-opacity="0.9"/>
<circle cx="1181.8" cy="889.1" r="1.6" fill="#3f9a94" fill-opacity="0.9"/>
<circle cx="1137.9" cy="903.4" r="2.4" fill="#3f9a94" fill-opacity="0.9"/>
<circle cx="1147.0" cy="901.9" r="2.4" fill="#3f9a94" fill-opacity="0.9"/>
<circle cx="1162.2" cy="907.0" r="2.4" fill="#3f9a94" fill-opacity="0.9"/>
<circle cx="1128.4" cy="908.0" r="1.6" fill="#3f9a94" fill-opacity="0.9"/>
<circle cx="1153.7" cy="916.1" r="3" fill="#3f9a94" fill-opacity="0.9"/>
<circle cx="1163.9" cy="917.1" r="1.6" fill="#3f9a94" fill-opacity="0.9"/>
<circle cx="1177.4" cy="918.6" r="1.6" fill="#3f9a94" fill-opacity="0.9"/>
<circle cx="1134.8" cy="919.6" r="1.6" fill="#3f9a94" fill-opacity="0.9"/>
<circle cx="1123.2" cy="923.4" r="1.6" fill="#3f9a94" fill-opacity="0.9"/>
<circle cx="1187.1" cy="926.2" r="1.6" fill="#3f9a94" fill-opacity="0.9"/>
<circle cx="1199.7" cy="928.7" r="1.6" fill="#3f9a94" fill-opacity="0.9"/>
<circle cx="1208.1" cy="933.3" r="1.6" fill="#3f9a94" fill-opacity="0.9"/>
<circle cx="1185.4" cy="937.1" r="1.6" fill="#3f9a94" fill-opacity="0.9"/>
<circle cx="1217.0" cy="944.5" r="2.4" fill="#3f9a94" fill-opacity="0.9"/>
<circle cx="1226.9" cy="956.5" r="1.6" fill="#3f9a94" fill-opacity="0.9"/>
<circle cx="1239.1" cy="971.9" r="2.4" fill="#3f9a94" fill-opacity="0.9"/>
<circle cx="1228.2" cy="979.9" r="1.6" fill="#3f9a94" fill-opacity="0.9"/>
<circle cx="1252.4" cy="990.5" r="1.6" fill="#3f9a94" fill-opacity="0.9"/>
<circle cx="1209.0" cy="916.1" r="1.6" fill="#3f9a94" fill-opacity="0.9"/>
<circle cx="1228.0" cy="905.5" r="1.6" fill="#3f9a94" fill-opacity="0.9"/>
<circle cx="1239.8" cy="914.6" r="1.6" fill="#3f9a94" fill-opacity="0.9"/>
<circle cx="1248.6" cy="913.3" r="1.6" fill="#3f9a94" fill-opacity="0.9"/>
<circle cx="1408.0" cy="707.2" r="1.7" fill="#5f5a56" fill-opacity="0.9"/>
<circle cx="1404.3" cy="712.5" r="1.7" fill="#5f5a56" fill-opacity="0.9"/>
<circle cx="1400.5" cy="717.7" r="1.7" fill="#5f5a56" fill-opacity="0.9"/>
<circle cx="1402.0" cy="722.9" r="1.7" fill="#5f5a56" fill-opacity="0.9"/>
<circle cx="1390.1" cy="738.6" r="1.7" fill="#5f5a56" fill-opacity="0.9"/>
<circle cx="1372.6" cy="761.8" r="1.7" fill="#5f5a56" fill-opacity="0.9"/>
<circle cx="1414.7" cy="713.9" r="1.7" fill="#5f5a56" fill-opacity="0.9"/>
<circle cx="1361.7" cy="709.5" r="1.7" fill="#5f5a56" fill-opacity="0.9"/>
<circle cx="1361.7" cy="700.5" r="1.7" fill="#5f5a56" fill-opacity="0.9"/>
<circle cx="1343.8" cy="707.5" r="1.7" fill="#5f5a56" fill-opacity="0.9"/>
<circle cx="1362.5" cy="693.8" r="1.7" fill="#5f5a56" fill-opacity="0.9"/>
<circle cx="1369.9" cy="696.0" r="1.7" fill="#5f5a56" fill-opacity="0.9"/>
<circle cx="1381.4" cy="683.0" r="1.7" fill="#5f5a56" fill-opacity="0.9"/>
<circle cx="1421.2" cy="687.5" r="1.7" fill="#5f5a56" fill-opacity="0.9"/>
<circle cx="1424.9" cy="684.5" r="1.7" fill="#5f5a56" fill-opacity="0.9"/>
<circle cx="1431.5" cy="670.6" r="1.7" fill="#5f5a56" fill-opacity="0.9"/>
<circle cx="1434.7" cy="623.5" r="10.9" fill="#7a716f" fill-opacity="0.85"/>
<circle cx="1433.8" cy="648.6" r="10.9" fill="#e15759" fill-opacity="0.72"/>
<circle cx="971.6" cy="609.4" r="9.7" fill="#4e79a7" fill-opacity="0.72"/>
<circle cx="956.7" cy="606.8" r="5.3" fill="#4e79a7" fill-opacity="0.72"/>
</g>
<rect x="894.9" y="1098.7" width="199.9" height="17.2" fill="#ffffff" fill-opacity="0.75"/>
<text x="898.3" y="1112.5" style="font-family:Liberation Sans" font-size="12.5" fill="#3a3a3a">© 2025 Mapbox © OpenStreetMap</text>
<rect x="1484.0" y="602.0" width="1" height="516.8" fill="#e6e6e6"/>
<rect x="890.1" y="1118.3" width="594.4" height="1" fill="#eeeeee"/>
</svg>
<svg style="left:0;top:0" width="1704" height="1138" viewBox="0 0 1704 1138">
<rect x="806.6" y="514.5" width="391.8" height="37.1" fill="none" stroke="#ff0000" stroke-width="2.8"/>
<circle cx="726.85" cy="533.05" r="19.0" fill="none" stroke="#ff0000" stroke-width="2.1"/>
<circle cx="1222.0" cy="532.9" r="19.1" fill="none" stroke="#ff0000" stroke-width="2.1"/>
<circle cx="1658.5" cy="110.0" r="18.6" fill="none" stroke="#ff0000" stroke-width="2.1"/>
<path d="M721.4,528.0 Q725.2,526.4 727.6,523.6 L728.1,523.6 L728.1,543.7" fill="none" stroke="#ff0000" stroke-width="3.2" stroke-linejoin="round" stroke-linecap="butt"/>
<text x="1222.3" y="543.8" text-anchor="middle" style="font-family:Liberation Sans" font-size="31.5" fill="#ff0000">2</text>
<text x="1658.6" y="121.0" text-anchor="middle" style="font-family:Liberation Sans" font-size="31.5" fill="#ff0000">3</text>
</svg>
</body></html>
